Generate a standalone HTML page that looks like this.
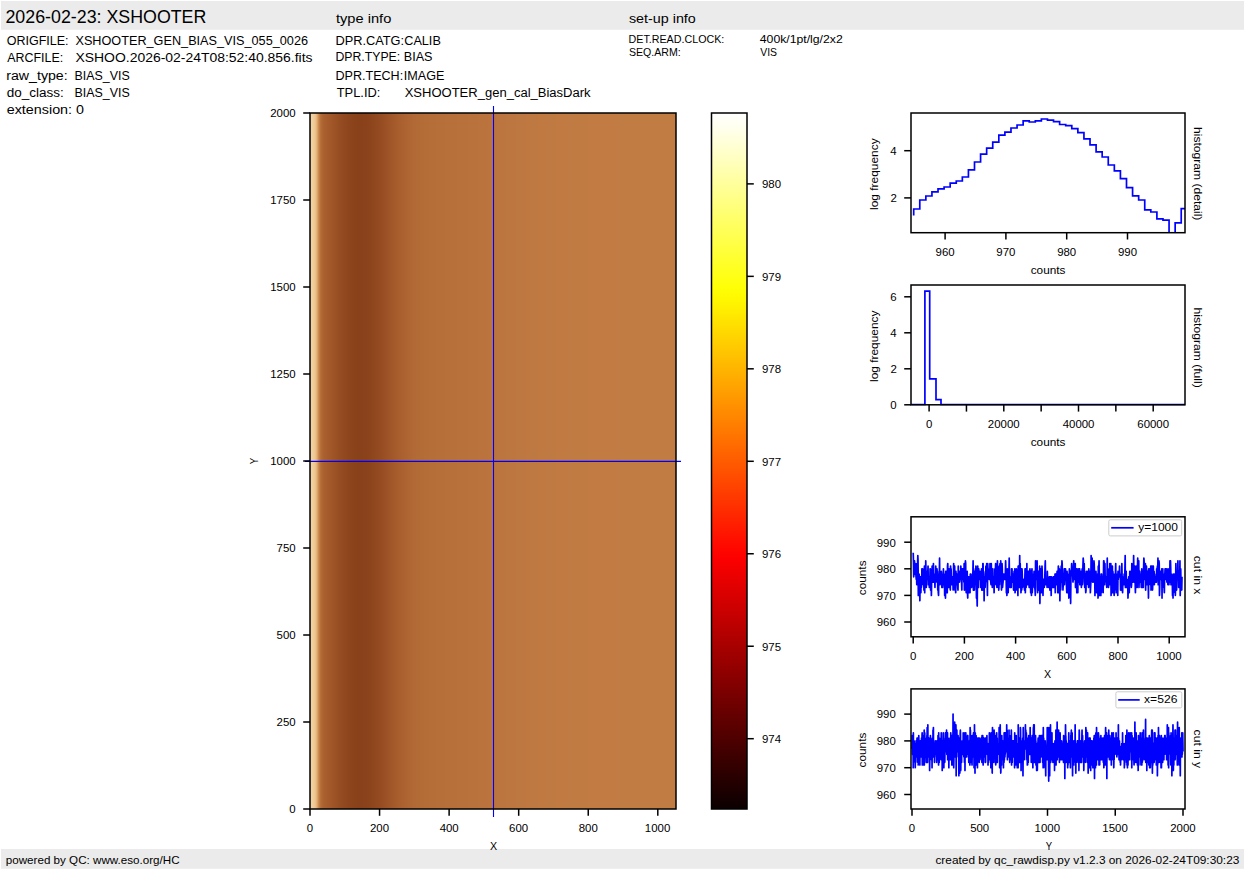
<!DOCTYPE html>
<html><head><meta charset="utf-8"><style>
html,body{margin:0;padding:0;background:#fff;}
body{width:1245px;height:870px;overflow:hidden;}
svg{display:block;font-family:"Liberation Sans", sans-serif;}
</style></head><body>
<svg width="1245" height="870" viewBox="0 0 1245 870">
<rect x="0" y="0" width="1245" height="870" fill="#fff"/>
<rect x="1" y="1" width="1243" height="28.8" fill="#ebebeb"/>
<rect x="1" y="849" width="1243" height="19.8" fill="#ebebeb"/>
<text x="5.48" y="22.90" font-size="17.50" textLength="200.87" lengthAdjust="spacingAndGlyphs" fill="#000">2026-02-23: XSHOOTER</text>
<text x="335.96" y="23.00" font-size="13.12" textLength="55.34" lengthAdjust="spacingAndGlyphs" fill="#000">type info</text>
<text x="628.92" y="22.90" font-size="13.12" textLength="66.89" lengthAdjust="spacingAndGlyphs" fill="#000">set-up info</text>
<text x="6.70" y="44.90" font-size="13.12" textLength="61.85" lengthAdjust="spacingAndGlyphs" fill="#000">ORIGFILE:</text>
<text x="75.43" y="44.90" font-size="13.12" textLength="232.57" lengthAdjust="spacingAndGlyphs" fill="#000">XSHOOTER_GEN_BIAS_VIS_055_0026</text>
<text x="7.30" y="61.60" font-size="13.12" textLength="55.91" lengthAdjust="spacingAndGlyphs" fill="#000">ARCFILE:</text>
<text x="75.43" y="61.60" font-size="13.12" textLength="237.06" lengthAdjust="spacingAndGlyphs" fill="#000">XSHOO.2026-02-24T08:52:40.856.fits</text>
<text x="6.26" y="79.50" font-size="13.12" textLength="61.41" lengthAdjust="spacingAndGlyphs" fill="#000">raw_type:</text>
<text x="74.57" y="79.50" font-size="13.12" textLength="55.17" lengthAdjust="spacingAndGlyphs" fill="#000">BIAS_VIS</text>
<text x="6.71" y="97.30" font-size="13.12" textLength="57.07" lengthAdjust="spacingAndGlyphs" fill="#000">do_class:</text>
<text x="74.57" y="97.30" font-size="13.12" textLength="55.17" lengthAdjust="spacingAndGlyphs" fill="#000">BIAS_VIS</text>
<text x="6.71" y="113.50" font-size="13.12" textLength="65.37" lengthAdjust="spacingAndGlyphs" fill="#000">extension:</text>
<text x="76.08" y="113.50" font-size="13.12" textLength="7.95" lengthAdjust="spacingAndGlyphs" fill="#000">0</text>
<text x="335.47" y="44.80" font-size="13.12" textLength="68.63" lengthAdjust="spacingAndGlyphs" fill="#000">DPR.CATG:</text>
<text x="404.30" y="44.80" font-size="13.12" textLength="36.51" lengthAdjust="spacingAndGlyphs" fill="#000">CALIB</text>
<text x="335.47" y="61.20" font-size="13.12" textLength="64.74" lengthAdjust="spacingAndGlyphs" fill="#000">DPR.TYPE:</text>
<text x="403.77" y="61.20" font-size="13.12" textLength="28.75" lengthAdjust="spacingAndGlyphs" fill="#000">BIAS</text>
<text x="335.47" y="79.60" font-size="13.12" textLength="67.69" lengthAdjust="spacingAndGlyphs" fill="#000">DPR.TECH:</text>
<text x="403.77" y="79.60" font-size="13.12" textLength="40.61" lengthAdjust="spacingAndGlyphs" fill="#000">IMAGE</text>
<text x="336.74" y="96.80" font-size="13.12" textLength="43.63" lengthAdjust="spacingAndGlyphs" fill="#000">TPL.ID:</text>
<text x="404.63" y="96.80" font-size="13.12" textLength="185.98" lengthAdjust="spacingAndGlyphs" fill="#000">XSHOOTER_gen_cal_BiasDark</text>
<text x="628.57" y="43.00" font-size="10.97" textLength="95.75" lengthAdjust="spacingAndGlyphs" fill="#000">DET.READ.CLOCK:</text>
<text x="759.79" y="43.00" font-size="10.97" textLength="82.96" lengthAdjust="spacingAndGlyphs" fill="#000">400k/1pt/lg/2x2</text>
<text x="628.91" y="55.50" font-size="10.97" textLength="51.73" lengthAdjust="spacingAndGlyphs" fill="#000">SEQ.ARM:</text>
<text x="760.22" y="55.50" font-size="10.97" textLength="16.86" lengthAdjust="spacingAndGlyphs" fill="#000">VIS</text>
<text x="5.80" y="863.80" font-size="10.97" textLength="173.74" lengthAdjust="spacingAndGlyphs" fill="#000">powered by QC: www.eso.org/HC</text>
<text x="935.43" y="863.80" font-size="10.97" textLength="303.90" lengthAdjust="spacingAndGlyphs" fill="#000">created by qc_rawdisp.py v1.2.3 on 2026-02-24T09:30:23</text>
<defs><linearGradient id="imgrad" x1="0" x2="1" y1="0" y2="0"><stop offset="0.0014" stop-color="#f2d1a1"/><stop offset="0.0041" stop-color="#f2d0a0"/><stop offset="0.0068" stop-color="#f1cf9e"/><stop offset="0.0096" stop-color="#f0cc9a"/><stop offset="0.0123" stop-color="#eec894"/><stop offset="0.0150" stop-color="#ebc08a"/><stop offset="0.0178" stop-color="#e5b47b"/><stop offset="0.0205" stop-color="#dba167"/><stop offset="0.0232" stop-color="#ce8d53"/><stop offset="0.0260" stop-color="#c17c44"/><stop offset="0.0287" stop-color="#b8703b"/><stop offset="0.0314" stop-color="#b26935"/><stop offset="0.0342" stop-color="#ae6532"/><stop offset="0.0369" stop-color="#ab6230"/><stop offset="0.0396" stop-color="#aa602e"/><stop offset="0.0423" stop-color="#a85e2d"/><stop offset="0.0451" stop-color="#a75d2c"/><stop offset="0.0478" stop-color="#a55c2c"/><stop offset="0.0505" stop-color="#a45a2b"/><stop offset="0.0533" stop-color="#a3592a"/><stop offset="0.0560" stop-color="#a25829"/><stop offset="0.0587" stop-color="#a15728"/><stop offset="0.0615" stop-color="#9f5527"/><stop offset="0.0642" stop-color="#9e5427"/><stop offset="0.0669" stop-color="#9d5326"/><stop offset="0.0697" stop-color="#9c5225"/><stop offset="0.0724" stop-color="#9a5124"/><stop offset="0.0751" stop-color="#995024"/><stop offset="0.0779" stop-color="#984e23"/><stop offset="0.0806" stop-color="#974d22"/><stop offset="0.0833" stop-color="#964c22"/><stop offset="0.0861" stop-color="#954b21"/><stop offset="0.0888" stop-color="#944a20"/><stop offset="0.0915" stop-color="#924920"/><stop offset="0.0943" stop-color="#91481f"/><stop offset="0.0970" stop-color="#91481f"/><stop offset="0.0997" stop-color="#90471e"/><stop offset="0.1025" stop-color="#8f461e"/><stop offset="0.1052" stop-color="#8e451d"/><stop offset="0.1079" stop-color="#8d451d"/><stop offset="0.1107" stop-color="#8c441d"/><stop offset="0.1134" stop-color="#8c441c"/><stop offset="0.1161" stop-color="#8b431c"/><stop offset="0.1189" stop-color="#8b431c"/><stop offset="0.1216" stop-color="#8a421b"/><stop offset="0.1243" stop-color="#8a421b"/><stop offset="0.1270" stop-color="#8a421b"/><stop offset="0.1298" stop-color="#89411b"/><stop offset="0.1325" stop-color="#89411b"/><stop offset="0.1352" stop-color="#89411b"/><stop offset="0.1380" stop-color="#89411b"/><stop offset="0.1407" stop-color="#89411b"/><stop offset="0.1434" stop-color="#89411b"/><stop offset="0.1462" stop-color="#8a421b"/><stop offset="0.1489" stop-color="#8a421b"/><stop offset="0.1516" stop-color="#8a421b"/><stop offset="0.1544" stop-color="#8b421c"/><stop offset="0.1571" stop-color="#8b431c"/><stop offset="0.1598" stop-color="#8c431c"/><stop offset="0.1626" stop-color="#8c441c"/><stop offset="0.1653" stop-color="#8d441d"/><stop offset="0.1680" stop-color="#8d451d"/><stop offset="0.1708" stop-color="#8e461d"/><stop offset="0.1735" stop-color="#8f461e"/><stop offset="0.1762" stop-color="#90471e"/><stop offset="0.1790" stop-color="#91481f"/><stop offset="0.1817" stop-color="#92491f"/><stop offset="0.1844" stop-color="#934920"/><stop offset="0.1872" stop-color="#944a20"/><stop offset="0.1899" stop-color="#954b21"/><stop offset="0.1926" stop-color="#964c21"/><stop offset="0.1954" stop-color="#974d22"/><stop offset="0.1981" stop-color="#984e23"/><stop offset="0.2008" stop-color="#994f23"/><stop offset="0.2036" stop-color="#9a5024"/><stop offset="0.2063" stop-color="#9b5125"/><stop offset="0.2090" stop-color="#9c5225"/><stop offset="0.2117" stop-color="#9d5326"/><stop offset="0.2145" stop-color="#9e5427"/><stop offset="0.2172" stop-color="#9f5527"/><stop offset="0.2199" stop-color="#a05628"/><stop offset="0.2227" stop-color="#a15729"/><stop offset="0.2254" stop-color="#a25829"/><stop offset="0.2281" stop-color="#a3592a"/><stop offset="0.2309" stop-color="#a45a2b"/><stop offset="0.2336" stop-color="#a55b2b"/><stop offset="0.2363" stop-color="#a65c2c"/><stop offset="0.2391" stop-color="#a75d2d"/><stop offset="0.2418" stop-color="#a85e2d"/><stop offset="0.2445" stop-color="#a95f2e"/><stop offset="0.2473" stop-color="#a9602e"/><stop offset="0.2500" stop-color="#aa612f"/><stop offset="0.2527" stop-color="#ab6130"/><stop offset="0.2555" stop-color="#ac6230"/><stop offset="0.2582" stop-color="#ac6331"/><stop offset="0.2609" stop-color="#ad6431"/><stop offset="0.2637" stop-color="#ae6432"/><stop offset="0.2664" stop-color="#ae6532"/><stop offset="0.2691" stop-color="#af6633"/><stop offset="0.2719" stop-color="#af6633"/><stop offset="0.2746" stop-color="#b06733"/><stop offset="0.2773" stop-color="#b06734"/><stop offset="0.2801" stop-color="#b16834"/><stop offset="0.2828" stop-color="#b16935"/><stop offset="0.2855" stop-color="#b26935"/><stop offset="0.2883" stop-color="#b26935"/><stop offset="0.2910" stop-color="#b26a36"/><stop offset="0.2937" stop-color="#b36a36"/><stop offset="0.2964" stop-color="#b36b36"/><stop offset="0.2992" stop-color="#b36b36"/><stop offset="0.3019" stop-color="#b46b37"/><stop offset="0.3046" stop-color="#b46c37"/><stop offset="0.3074" stop-color="#b46c37"/><stop offset="0.3101" stop-color="#b46c37"/><stop offset="0.3128" stop-color="#b56c38"/><stop offset="0.3156" stop-color="#b56d38"/><stop offset="0.3183" stop-color="#b56d38"/><stop offset="0.3210" stop-color="#b56d38"/><stop offset="0.3238" stop-color="#b56d38"/><stop offset="0.3265" stop-color="#b66e38"/><stop offset="0.3292" stop-color="#b66e39"/><stop offset="0.3320" stop-color="#b66e39"/><stop offset="0.3347" stop-color="#b66e39"/><stop offset="0.3374" stop-color="#b66e39"/><stop offset="0.3402" stop-color="#b66e39"/><stop offset="0.3429" stop-color="#b66e39"/><stop offset="0.3456" stop-color="#b66f39"/><stop offset="0.3484" stop-color="#b76f39"/><stop offset="0.3511" stop-color="#b76f39"/><stop offset="0.3538" stop-color="#b76f39"/><stop offset="0.3566" stop-color="#b76f3a"/><stop offset="0.3593" stop-color="#b76f3a"/><stop offset="0.3620" stop-color="#b76f3a"/><stop offset="0.3648" stop-color="#b76f3a"/><stop offset="0.3675" stop-color="#b76f3a"/><stop offset="0.3702" stop-color="#b7703a"/><stop offset="0.3730" stop-color="#b7703a"/><stop offset="0.3757" stop-color="#b7703a"/><stop offset="0.3784" stop-color="#b7703a"/><stop offset="0.3811" stop-color="#b8703a"/><stop offset="0.3839" stop-color="#b8703a"/><stop offset="0.3866" stop-color="#b8703a"/><stop offset="0.3893" stop-color="#b8703a"/><stop offset="0.3921" stop-color="#b8703a"/><stop offset="0.3948" stop-color="#b8703b"/><stop offset="0.3975" stop-color="#b8703b"/><stop offset="0.4003" stop-color="#b8703b"/><stop offset="0.4030" stop-color="#b8713b"/><stop offset="0.4057" stop-color="#b8713b"/><stop offset="0.4085" stop-color="#b8713b"/><stop offset="0.4112" stop-color="#b8713b"/><stop offset="0.4139" stop-color="#b8713b"/><stop offset="0.4167" stop-color="#b8713b"/><stop offset="0.4194" stop-color="#b9713b"/><stop offset="0.4221" stop-color="#b9713b"/><stop offset="0.4249" stop-color="#b9713b"/><stop offset="0.4276" stop-color="#b9713b"/><stop offset="0.4303" stop-color="#b9713b"/><stop offset="0.4331" stop-color="#b9723b"/><stop offset="0.4358" stop-color="#b9723c"/><stop offset="0.4385" stop-color="#b9723c"/><stop offset="0.4413" stop-color="#b9723c"/><stop offset="0.4440" stop-color="#b9723c"/><stop offset="0.4467" stop-color="#b9723c"/><stop offset="0.4495" stop-color="#b9723c"/><stop offset="0.4522" stop-color="#ba723c"/><stop offset="0.4549" stop-color="#ba723c"/><stop offset="0.4577" stop-color="#ba723c"/><stop offset="0.4604" stop-color="#ba733c"/><stop offset="0.4631" stop-color="#ba733c"/><stop offset="0.4658" stop-color="#ba733c"/><stop offset="0.4686" stop-color="#ba733d"/><stop offset="0.4713" stop-color="#ba733d"/><stop offset="0.4740" stop-color="#ba733d"/><stop offset="0.4768" stop-color="#ba733d"/><stop offset="0.4795" stop-color="#ba733d"/><stop offset="0.4822" stop-color="#ba733d"/><stop offset="0.4850" stop-color="#bb733d"/><stop offset="0.4877" stop-color="#bb743d"/><stop offset="0.4904" stop-color="#bb743d"/><stop offset="0.4932" stop-color="#bb743d"/><stop offset="0.4959" stop-color="#bb743d"/><stop offset="0.4986" stop-color="#bb743d"/><stop offset="0.5014" stop-color="#bb743e"/><stop offset="0.5041" stop-color="#bb743e"/><stop offset="0.5068" stop-color="#bb743e"/><stop offset="0.5096" stop-color="#bb743e"/><stop offset="0.5123" stop-color="#bb753e"/><stop offset="0.5150" stop-color="#bc753e"/><stop offset="0.5178" stop-color="#bc753e"/><stop offset="0.5205" stop-color="#bc753e"/><stop offset="0.5232" stop-color="#bc753e"/><stop offset="0.5260" stop-color="#bc753e"/><stop offset="0.5287" stop-color="#bc753e"/><stop offset="0.5314" stop-color="#bc753f"/><stop offset="0.5342" stop-color="#bc753f"/><stop offset="0.5369" stop-color="#bc763f"/><stop offset="0.5396" stop-color="#bc763f"/><stop offset="0.5423" stop-color="#bc763f"/><stop offset="0.5451" stop-color="#bc763f"/><stop offset="0.5478" stop-color="#bd763f"/><stop offset="0.5505" stop-color="#bd763f"/><stop offset="0.5533" stop-color="#bd763f"/><stop offset="0.5560" stop-color="#bd763f"/><stop offset="0.5587" stop-color="#bd763f"/><stop offset="0.5615" stop-color="#bd763f"/><stop offset="0.5642" stop-color="#bd7740"/><stop offset="0.5669" stop-color="#bd7740"/><stop offset="0.5697" stop-color="#bd7740"/><stop offset="0.5724" stop-color="#bd7740"/><stop offset="0.5751" stop-color="#bd7740"/><stop offset="0.5779" stop-color="#bd7740"/><stop offset="0.5806" stop-color="#be7740"/><stop offset="0.5833" stop-color="#be7740"/><stop offset="0.5861" stop-color="#be7740"/><stop offset="0.5888" stop-color="#be7740"/><stop offset="0.5915" stop-color="#be7840"/><stop offset="0.5943" stop-color="#be7840"/><stop offset="0.5970" stop-color="#be7840"/><stop offset="0.5997" stop-color="#be7840"/><stop offset="0.6025" stop-color="#be7841"/><stop offset="0.6052" stop-color="#be7841"/><stop offset="0.6079" stop-color="#be7841"/><stop offset="0.6107" stop-color="#be7841"/><stop offset="0.6134" stop-color="#be7841"/><stop offset="0.6161" stop-color="#be7841"/><stop offset="0.6189" stop-color="#be7841"/><stop offset="0.6216" stop-color="#bf7841"/><stop offset="0.6243" stop-color="#bf7941"/><stop offset="0.6270" stop-color="#bf7941"/><stop offset="0.6298" stop-color="#bf7941"/><stop offset="0.6325" stop-color="#bf7941"/><stop offset="0.6352" stop-color="#bf7941"/><stop offset="0.6380" stop-color="#bf7941"/><stop offset="0.6407" stop-color="#bf7941"/><stop offset="0.6434" stop-color="#bf7941"/><stop offset="0.6462" stop-color="#bf7942"/><stop offset="0.6489" stop-color="#bf7942"/><stop offset="0.6516" stop-color="#bf7942"/><stop offset="0.6544" stop-color="#bf7942"/><stop offset="0.6571" stop-color="#bf7942"/><stop offset="0.6598" stop-color="#bf7942"/><stop offset="0.6626" stop-color="#bf7942"/><stop offset="0.6653" stop-color="#bf7a42"/><stop offset="0.6680" stop-color="#bf7a42"/><stop offset="0.6708" stop-color="#bf7a42"/><stop offset="0.6735" stop-color="#c07a42"/><stop offset="0.6762" stop-color="#c07a42"/><stop offset="0.6790" stop-color="#c07a42"/><stop offset="0.6817" stop-color="#c07a42"/><stop offset="0.6844" stop-color="#c07a42"/><stop offset="0.6872" stop-color="#c07a42"/><stop offset="0.6899" stop-color="#c07a42"/><stop offset="0.6926" stop-color="#c07a42"/><stop offset="0.6954" stop-color="#c07a42"/><stop offset="0.6981" stop-color="#c07a42"/><stop offset="0.7008" stop-color="#c07a42"/><stop offset="0.7036" stop-color="#c07a42"/><stop offset="0.7063" stop-color="#c07a43"/><stop offset="0.7090" stop-color="#c07a43"/><stop offset="0.7117" stop-color="#c07a43"/><stop offset="0.7145" stop-color="#c07a43"/><stop offset="0.7172" stop-color="#c07a43"/><stop offset="0.7199" stop-color="#c07b43"/><stop offset="0.7227" stop-color="#c07b43"/><stop offset="0.7254" stop-color="#c07b43"/><stop offset="0.7281" stop-color="#c07b43"/><stop offset="0.7309" stop-color="#c07b43"/><stop offset="0.7336" stop-color="#c07b43"/><stop offset="0.7363" stop-color="#c07b43"/><stop offset="0.7391" stop-color="#c07b43"/><stop offset="0.7418" stop-color="#c07b43"/><stop offset="0.7445" stop-color="#c07b43"/><stop offset="0.7473" stop-color="#c07b43"/><stop offset="0.7500" stop-color="#c07b43"/><stop offset="0.7527" stop-color="#c07b43"/><stop offset="0.7555" stop-color="#c07b43"/><stop offset="0.7582" stop-color="#c07b43"/><stop offset="0.7609" stop-color="#c17b43"/><stop offset="0.7637" stop-color="#c17b43"/><stop offset="0.7664" stop-color="#c17b43"/><stop offset="0.7691" stop-color="#c17b43"/><stop offset="0.7719" stop-color="#c17b43"/><stop offset="0.7746" stop-color="#c17b43"/><stop offset="0.7773" stop-color="#c17b43"/><stop offset="0.7801" stop-color="#c17b43"/><stop offset="0.7828" stop-color="#c17b43"/><stop offset="0.7855" stop-color="#c17b43"/><stop offset="0.7883" stop-color="#c17b43"/><stop offset="0.7910" stop-color="#c17b43"/><stop offset="0.7937" stop-color="#c17b43"/><stop offset="0.7964" stop-color="#c17b43"/><stop offset="0.7992" stop-color="#c17b43"/><stop offset="0.8019" stop-color="#c17b43"/><stop offset="0.8046" stop-color="#c17b43"/><stop offset="0.8074" stop-color="#c17b43"/><stop offset="0.8101" stop-color="#c17b43"/><stop offset="0.8128" stop-color="#c17b43"/><stop offset="0.8156" stop-color="#c17b43"/><stop offset="0.8183" stop-color="#c17b43"/><stop offset="0.8210" stop-color="#c17b43"/><stop offset="0.8238" stop-color="#c17b43"/><stop offset="0.8265" stop-color="#c17b43"/><stop offset="0.8292" stop-color="#c17b43"/><stop offset="0.8320" stop-color="#c17b43"/><stop offset="0.8347" stop-color="#c17b43"/><stop offset="0.8374" stop-color="#c17b43"/><stop offset="0.8402" stop-color="#c17b43"/><stop offset="0.8429" stop-color="#c17b44"/><stop offset="0.8456" stop-color="#c17b44"/><stop offset="0.8484" stop-color="#c17b44"/><stop offset="0.8511" stop-color="#c17c44"/><stop offset="0.8538" stop-color="#c17c44"/><stop offset="0.8566" stop-color="#c17c44"/><stop offset="0.8593" stop-color="#c17c44"/><stop offset="0.8620" stop-color="#c17c44"/><stop offset="0.8648" stop-color="#c17c44"/><stop offset="0.8675" stop-color="#c17c44"/><stop offset="0.8702" stop-color="#c17c44"/><stop offset="0.8730" stop-color="#c17c44"/><stop offset="0.8757" stop-color="#c17c44"/><stop offset="0.8784" stop-color="#c17c44"/><stop offset="0.8811" stop-color="#c17c44"/><stop offset="0.8839" stop-color="#c17c44"/><stop offset="0.8866" stop-color="#c17c44"/><stop offset="0.8893" stop-color="#c17c44"/><stop offset="0.8921" stop-color="#c17c44"/><stop offset="0.8948" stop-color="#c17c44"/><stop offset="0.8975" stop-color="#c17c44"/><stop offset="0.9003" stop-color="#c17c44"/><stop offset="0.9030" stop-color="#c17c44"/><stop offset="0.9057" stop-color="#c17c44"/><stop offset="0.9085" stop-color="#c17c44"/><stop offset="0.9112" stop-color="#c17c44"/><stop offset="0.9139" stop-color="#c17c44"/><stop offset="0.9167" stop-color="#c17c44"/><stop offset="0.9194" stop-color="#c17c44"/><stop offset="0.9221" stop-color="#c17c44"/><stop offset="0.9249" stop-color="#c17c44"/><stop offset="0.9276" stop-color="#c17c44"/><stop offset="0.9303" stop-color="#c17c44"/><stop offset="0.9331" stop-color="#c17c44"/><stop offset="0.9358" stop-color="#c17c44"/><stop offset="0.9385" stop-color="#c17c44"/><stop offset="0.9413" stop-color="#c17c44"/><stop offset="0.9440" stop-color="#c17c44"/><stop offset="0.9467" stop-color="#c17c44"/><stop offset="0.9495" stop-color="#c17c44"/><stop offset="0.9522" stop-color="#c17c44"/><stop offset="0.9549" stop-color="#c17c44"/><stop offset="0.9577" stop-color="#c17c44"/><stop offset="0.9604" stop-color="#c17c44"/><stop offset="0.9631" stop-color="#c17c44"/><stop offset="0.9658" stop-color="#c17c44"/><stop offset="0.9686" stop-color="#c17c44"/><stop offset="0.9713" stop-color="#c17c44"/><stop offset="0.9740" stop-color="#c17c44"/><stop offset="0.9768" stop-color="#c17c44"/><stop offset="0.9795" stop-color="#c17c44"/><stop offset="0.9822" stop-color="#c17c44"/><stop offset="0.9850" stop-color="#c17c44"/><stop offset="0.9877" stop-color="#c17c44"/><stop offset="0.9904" stop-color="#c17c44"/><stop offset="0.9932" stop-color="#c17c44"/><stop offset="0.9959" stop-color="#c17c44"/><stop offset="0.9986" stop-color="#c17c44"/></linearGradient>
<linearGradient id="cbgrad" x1="0" x2="0" y1="1" y2="0"><stop offset="0.0000" stop-color="#0b0000"/><stop offset="0.0156" stop-color="#150000"/><stop offset="0.0312" stop-color="#200000"/><stop offset="0.0469" stop-color="#2a0000"/><stop offset="0.0625" stop-color="#350000"/><stop offset="0.0781" stop-color="#3f0000"/><stop offset="0.0938" stop-color="#4a0000"/><stop offset="0.1094" stop-color="#540000"/><stop offset="0.1250" stop-color="#5f0000"/><stop offset="0.1406" stop-color="#690000"/><stop offset="0.1562" stop-color="#740000"/><stop offset="0.1719" stop-color="#7e0000"/><stop offset="0.1875" stop-color="#890000"/><stop offset="0.2031" stop-color="#930000"/><stop offset="0.2188" stop-color="#9e0000"/><stop offset="0.2344" stop-color="#a80000"/><stop offset="0.2500" stop-color="#b30000"/><stop offset="0.2656" stop-color="#bd0000"/><stop offset="0.2812" stop-color="#c80000"/><stop offset="0.2969" stop-color="#d20000"/><stop offset="0.3125" stop-color="#dd0000"/><stop offset="0.3281" stop-color="#e70000"/><stop offset="0.3438" stop-color="#f20000"/><stop offset="0.3594" stop-color="#fc0000"/><stop offset="0.3750" stop-color="#ff0800"/><stop offset="0.3906" stop-color="#ff1200"/><stop offset="0.4062" stop-color="#ff1d00"/><stop offset="0.4219" stop-color="#ff2700"/><stop offset="0.4375" stop-color="#ff3200"/><stop offset="0.4531" stop-color="#ff3c00"/><stop offset="0.4688" stop-color="#ff4700"/><stop offset="0.4844" stop-color="#ff5100"/><stop offset="0.5000" stop-color="#ff5c00"/><stop offset="0.5156" stop-color="#ff6600"/><stop offset="0.5312" stop-color="#ff7100"/><stop offset="0.5469" stop-color="#ff7b00"/><stop offset="0.5625" stop-color="#ff8600"/><stop offset="0.5781" stop-color="#ff9000"/><stop offset="0.5938" stop-color="#ff9b00"/><stop offset="0.6094" stop-color="#ffa500"/><stop offset="0.6250" stop-color="#ffb000"/><stop offset="0.6406" stop-color="#ffba00"/><stop offset="0.6562" stop-color="#ffc500"/><stop offset="0.6719" stop-color="#ffcf00"/><stop offset="0.6875" stop-color="#ffda00"/><stop offset="0.7031" stop-color="#ffe400"/><stop offset="0.7188" stop-color="#ffef00"/><stop offset="0.7344" stop-color="#fff900"/><stop offset="0.7500" stop-color="#ffff07"/><stop offset="0.7656" stop-color="#ffff17"/><stop offset="0.7812" stop-color="#ffff26"/><stop offset="0.7969" stop-color="#ffff36"/><stop offset="0.8125" stop-color="#ffff46"/><stop offset="0.8281" stop-color="#ffff56"/><stop offset="0.8438" stop-color="#ffff65"/><stop offset="0.8594" stop-color="#ffff75"/><stop offset="0.8750" stop-color="#ffff85"/><stop offset="0.8906" stop-color="#ffff95"/><stop offset="0.9062" stop-color="#ffffa4"/><stop offset="0.9219" stop-color="#ffffb4"/><stop offset="0.9375" stop-color="#ffffc4"/><stop offset="0.9531" stop-color="#ffffd4"/><stop offset="0.9688" stop-color="#ffffe3"/><stop offset="0.9844" stop-color="#fffff3"/><stop offset="1.0000" stop-color="#ffffff"/></linearGradient></defs>
<rect x="310.0" y="113.0" width="366" height="696" fill="url(#imgrad)"/>
<line x1="493.50" y1="106.00" x2="493.50" y2="817.00" stroke="#0000ff" stroke-width="1.1" />
<line x1="305.00" y1="461.40" x2="681.00" y2="461.40" stroke="#0000ff" stroke-width="1.1" />
<rect x="310.00" y="113.00" width="366.00" height="696.00" fill="none" stroke="#000" stroke-width="1.5" stroke-linejoin="miter"/>
<line x1="310.00" y1="809.00" x2="310.00" y2="815.80" stroke="#000" stroke-width="1.5" />
<text x="306.82" y="832.39" font-size="10.50" textLength="6.36" lengthAdjust="spacingAndGlyphs" fill="#000">0</text>
<line x1="379.56" y1="809.00" x2="379.56" y2="815.80" stroke="#000" stroke-width="1.5" />
<text x="369.98" y="832.39" font-size="10.50" textLength="19.09" lengthAdjust="spacingAndGlyphs" fill="#000">200</text>
<line x1="449.12" y1="809.00" x2="449.12" y2="815.80" stroke="#000" stroke-width="1.5" />
<text x="439.66" y="832.39" font-size="10.50" textLength="19.09" lengthAdjust="spacingAndGlyphs" fill="#000">400</text>
<line x1="518.68" y1="809.00" x2="518.68" y2="815.80" stroke="#000" stroke-width="1.5" />
<text x="509.12" y="832.39" font-size="10.50" textLength="19.09" lengthAdjust="spacingAndGlyphs" fill="#000">600</text>
<line x1="588.24" y1="809.00" x2="588.24" y2="815.80" stroke="#000" stroke-width="1.5" />
<text x="578.69" y="832.39" font-size="10.50" textLength="19.09" lengthAdjust="spacingAndGlyphs" fill="#000">800</text>
<line x1="657.80" y1="809.00" x2="657.80" y2="815.80" stroke="#000" stroke-width="1.5" />
<text x="644.86" y="832.39" font-size="10.50" textLength="25.45" lengthAdjust="spacingAndGlyphs" fill="#000">1000</text>
<line x1="303.20" y1="809.00" x2="310.00" y2="809.00" stroke="#000" stroke-width="1.5" />
<text x="289.30" y="813.35" font-size="10.50" textLength="6.36" lengthAdjust="spacingAndGlyphs" fill="#000">0</text>
<line x1="303.20" y1="722.00" x2="310.00" y2="722.00" stroke="#000" stroke-width="1.5" />
<text x="276.58" y="726.35" font-size="10.50" textLength="19.09" lengthAdjust="spacingAndGlyphs" fill="#000">250</text>
<line x1="303.20" y1="635.00" x2="310.00" y2="635.00" stroke="#000" stroke-width="1.5" />
<text x="276.58" y="639.35" font-size="10.50" textLength="19.09" lengthAdjust="spacingAndGlyphs" fill="#000">500</text>
<line x1="303.20" y1="548.00" x2="310.00" y2="548.00" stroke="#000" stroke-width="1.5" />
<text x="276.58" y="552.35" font-size="10.50" textLength="19.09" lengthAdjust="spacingAndGlyphs" fill="#000">750</text>
<line x1="303.20" y1="461.00" x2="310.00" y2="461.00" stroke="#000" stroke-width="1.5" />
<text x="270.21" y="465.34" font-size="10.50" textLength="25.45" lengthAdjust="spacingAndGlyphs" fill="#000">1000</text>
<line x1="303.20" y1="374.00" x2="310.00" y2="374.00" stroke="#000" stroke-width="1.5" />
<text x="270.21" y="378.34" font-size="10.50" textLength="25.45" lengthAdjust="spacingAndGlyphs" fill="#000">1250</text>
<line x1="303.20" y1="287.00" x2="310.00" y2="287.00" stroke="#000" stroke-width="1.5" />
<text x="270.21" y="291.34" font-size="10.50" textLength="25.45" lengthAdjust="spacingAndGlyphs" fill="#000">1500</text>
<line x1="303.20" y1="200.00" x2="310.00" y2="200.00" stroke="#000" stroke-width="1.5" />
<text x="270.21" y="204.34" font-size="10.50" textLength="25.45" lengthAdjust="spacingAndGlyphs" fill="#000">1750</text>
<line x1="303.20" y1="113.00" x2="310.00" y2="113.00" stroke="#000" stroke-width="1.5" />
<text x="270.21" y="117.34" font-size="10.50" textLength="25.45" lengthAdjust="spacingAndGlyphs" fill="#000">2000</text>
<text x="489.95" y="850.00" font-size="10.92" textLength="7.12" lengthAdjust="spacingAndGlyphs" fill="#000">X</text>
<g transform="translate(257.70,461.00) rotate(-90)"><text x="-3.18" y="0" font-size="10.92" textLength="6.35" lengthAdjust="spacingAndGlyphs" fill="#000">Y</text></g>
<rect x="711.5" y="113.0" width="35.50" height="696.00" fill="url(#cbgrad)"/>
<rect x="711.50" y="113.00" width="35.50" height="696.00" fill="none" stroke="#000" stroke-width="1.5" stroke-linejoin="miter"/>
<line x1="747.00" y1="738.70" x2="753.80" y2="738.70" stroke="#000" stroke-width="1.5" />
<text x="761.97" y="743.25" font-size="10.50" textLength="19.09" lengthAdjust="spacingAndGlyphs" fill="#000">974</text>
<line x1="747.00" y1="646.23" x2="753.80" y2="646.23" stroke="#000" stroke-width="1.5" />
<text x="761.97" y="650.77" font-size="10.50" textLength="19.09" lengthAdjust="spacingAndGlyphs" fill="#000">975</text>
<line x1="747.00" y1="553.76" x2="753.80" y2="553.76" stroke="#000" stroke-width="1.5" />
<text x="761.97" y="558.30" font-size="10.50" textLength="19.09" lengthAdjust="spacingAndGlyphs" fill="#000">976</text>
<line x1="747.00" y1="461.29" x2="753.80" y2="461.29" stroke="#000" stroke-width="1.5" />
<text x="761.97" y="465.84" font-size="10.50" textLength="19.09" lengthAdjust="spacingAndGlyphs" fill="#000">977</text>
<line x1="747.00" y1="368.82" x2="753.80" y2="368.82" stroke="#000" stroke-width="1.5" />
<text x="761.97" y="373.37" font-size="10.50" textLength="19.09" lengthAdjust="spacingAndGlyphs" fill="#000">978</text>
<line x1="747.00" y1="276.35" x2="753.80" y2="276.35" stroke="#000" stroke-width="1.5" />
<text x="761.97" y="280.89" font-size="10.50" textLength="19.09" lengthAdjust="spacingAndGlyphs" fill="#000">979</text>
<line x1="747.00" y1="183.88" x2="753.80" y2="183.88" stroke="#000" stroke-width="1.5" />
<text x="761.97" y="188.43" font-size="10.50" textLength="19.09" lengthAdjust="spacingAndGlyphs" fill="#000">980</text>
<clipPath id="chd"><rect x="911.0" y="113.0" width="274.0" height="119.69999999999999"/></clipPath>
<path d="M913.70,215.6 L913.70,209.00 L919.78,209.00 L919.78,200.00 L925.86,200.00 L925.86,196.00 L931.94,196.00 L931.94,191.90 L938.02,191.90 L938.02,188.90 L944.10,188.90 L944.10,187.00 L950.18,187.00 L950.18,183.20 L956.26,183.20 L956.26,181.00 L962.34,181.00 L962.34,177.00 L968.42,177.00 L968.42,169.80 L974.50,169.80 L974.50,162.00 L980.58,162.00 L980.58,154.10 L986.66,154.10 L986.66,148.10 L992.74,148.10 L992.74,142.10 L998.82,142.10 L998.82,135.10 L1004.90,135.10 L1004.90,132.10 L1010.98,132.10 L1010.98,128.00 L1017.06,128.00 L1017.06,125.00 L1023.14,125.00 L1023.14,120.80 L1029.22,120.80 L1029.22,122.00 L1035.30,122.00 L1035.30,120.80 L1041.38,120.80 L1041.38,119.00 L1047.46,119.00 L1047.46,120.20 L1053.54,120.20 L1053.54,121.70 L1059.62,121.70 L1059.62,124.50 L1065.70,124.50 L1065.70,125.70 L1071.78,125.70 L1071.78,128.70 L1077.86,128.70 L1077.86,132.70 L1083.94,132.70 L1083.94,138.80 L1090.02,138.80 L1090.02,144.80 L1096.10,144.80 L1096.10,151.80 L1102.18,151.80 L1102.18,157.00 L1108.26,157.00 L1108.26,165.00 L1114.34,165.00 L1114.34,170.80 L1120.42,170.80 L1120.42,178.70 L1126.50,178.70 L1126.50,187.70 L1132.58,187.70 L1132.58,195.90 L1138.66,195.90 L1138.66,200.00 L1144.74,200.00 L1144.74,209.80 L1150.82,209.80 L1150.82,212.00 L1156.90,212.00 L1156.90,218.80 L1162.98,218.80 L1162.98,220.10 L1169.06,220.10 L1169.06,237.70 L1175.14,237.70 L1175.14,222.80 L1181.22,222.80 L1181.22,208.60 L1187.30,208.60" fill="none" stroke="#0000ff" stroke-width="1.7" stroke-linejoin="miter" clip-path="url(#chd)"/>
<rect x="911.00" y="113.00" width="274.00" height="119.70" fill="none" stroke="#000" stroke-width="1.5" stroke-linejoin="miter"/>
<line x1="945.10" y1="232.70" x2="945.10" y2="239.50" stroke="#000" stroke-width="1.5" />
<text x="935.57" y="256.19" font-size="10.50" textLength="19.09" lengthAdjust="spacingAndGlyphs" fill="#000">960</text>
<line x1="1005.90" y1="232.70" x2="1005.90" y2="239.50" stroke="#000" stroke-width="1.5" />
<text x="996.37" y="256.19" font-size="10.50" textLength="19.09" lengthAdjust="spacingAndGlyphs" fill="#000">970</text>
<line x1="1066.70" y1="232.70" x2="1066.70" y2="239.50" stroke="#000" stroke-width="1.5" />
<text x="1057.17" y="256.19" font-size="10.50" textLength="19.09" lengthAdjust="spacingAndGlyphs" fill="#000">980</text>
<line x1="1127.50" y1="232.70" x2="1127.50" y2="239.50" stroke="#000" stroke-width="1.5" />
<text x="1117.97" y="256.19" font-size="10.50" textLength="19.09" lengthAdjust="spacingAndGlyphs" fill="#000">990</text>
<line x1="904.20" y1="197.90" x2="911.00" y2="197.90" stroke="#000" stroke-width="1.5" />
<text x="890.64" y="202.24" font-size="10.50" textLength="6.36" lengthAdjust="spacingAndGlyphs" fill="#000">2</text>
<line x1="904.20" y1="150.70" x2="911.00" y2="150.70" stroke="#000" stroke-width="1.5" />
<text x="890.20" y="155.04" font-size="10.50" textLength="6.36" lengthAdjust="spacingAndGlyphs" fill="#000">4</text>
<text x="1030.69" y="274.00" font-size="10.92" textLength="34.76" lengthAdjust="spacingAndGlyphs" fill="#000">counts</text>
<g transform="translate(878.10,173.85) rotate(-90)"><text x="-36.11" y="0" font-size="10.92" textLength="71.55" lengthAdjust="spacingAndGlyphs" fill="#000">log frequency</text></g>
<g transform="translate(1194.00,173.70) rotate(90)"><text x="-46.71" y="0" font-size="10.92" textLength="93.37" lengthAdjust="spacingAndGlyphs" fill="#000">histogram (detail)</text></g>
<path d="M911.00,404.50 L924.9,404.50 L924.9,291.1 L929.7,291.1 L929.7,378.9 L936.0,378.9 L936.0,399.6 L941.0,399.6 L941.0,404.50 L1185.00,404.50" fill="none" stroke="#0000ff" stroke-width="1.7" stroke-linejoin="miter"/>
<rect x="911.00" y="285.00" width="274.00" height="119.80" fill="none" stroke="#000" stroke-width="1.5" stroke-linejoin="miter"/>
<line x1="929.10" y1="404.80" x2="929.10" y2="411.60" stroke="#000" stroke-width="1.5" />
<text x="925.92" y="428.19" font-size="10.50" textLength="6.36" lengthAdjust="spacingAndGlyphs" fill="#000">0</text>
<line x1="966.45" y1="404.80" x2="966.45" y2="411.60" stroke="#000" stroke-width="1.5" />
<line x1="1003.80" y1="404.80" x2="1003.80" y2="411.60" stroke="#000" stroke-width="1.5" />
<text x="987.86" y="428.19" font-size="10.50" textLength="31.81" lengthAdjust="spacingAndGlyphs" fill="#000">20000</text>
<line x1="1041.15" y1="404.80" x2="1041.15" y2="411.60" stroke="#000" stroke-width="1.5" />
<line x1="1078.50" y1="404.80" x2="1078.50" y2="411.60" stroke="#000" stroke-width="1.5" />
<text x="1062.68" y="428.19" font-size="10.50" textLength="31.81" lengthAdjust="spacingAndGlyphs" fill="#000">40000</text>
<line x1="1115.85" y1="404.80" x2="1115.85" y2="411.60" stroke="#000" stroke-width="1.5" />
<line x1="1153.20" y1="404.80" x2="1153.20" y2="411.60" stroke="#000" stroke-width="1.5" />
<text x="1137.28" y="428.19" font-size="10.50" textLength="31.81" lengthAdjust="spacingAndGlyphs" fill="#000">60000</text>
<line x1="904.20" y1="404.80" x2="911.00" y2="404.80" stroke="#000" stroke-width="1.5" />
<text x="890.30" y="409.14" font-size="10.50" textLength="6.36" lengthAdjust="spacingAndGlyphs" fill="#000">0</text>
<line x1="904.20" y1="368.80" x2="911.00" y2="368.80" stroke="#000" stroke-width="1.5" />
<text x="890.64" y="373.14" font-size="10.50" textLength="6.36" lengthAdjust="spacingAndGlyphs" fill="#000">2</text>
<line x1="904.20" y1="332.80" x2="911.00" y2="332.80" stroke="#000" stroke-width="1.5" />
<text x="890.20" y="337.14" font-size="10.50" textLength="6.36" lengthAdjust="spacingAndGlyphs" fill="#000">4</text>
<line x1="904.20" y1="296.80" x2="911.00" y2="296.80" stroke="#000" stroke-width="1.5" />
<text x="890.27" y="301.14" font-size="10.50" textLength="6.36" lengthAdjust="spacingAndGlyphs" fill="#000">6</text>
<text x="1030.69" y="446.00" font-size="10.92" textLength="34.76" lengthAdjust="spacingAndGlyphs" fill="#000">counts</text>
<g transform="translate(878.10,345.90) rotate(-90)"><text x="-36.11" y="0" font-size="10.92" textLength="71.55" lengthAdjust="spacingAndGlyphs" fill="#000">log frequency</text></g>
<g transform="translate(1194.00,347.70) rotate(90)"><text x="-40.11" y="0" font-size="10.92" textLength="80.17" lengthAdjust="spacingAndGlyphs" fill="#000">histogram (full)</text></g>
<polyline points="913.20,552.84 913.46,560.82 913.71,576.78 913.97,574.12 914.22,571.46 914.48,560.82 914.74,574.12 914.99,574.12 915.25,563.48 915.50,563.48 915.76,571.46 916.02,576.78 916.27,579.44 916.53,574.12 916.78,584.76 917.04,563.48 917.30,574.12 917.55,566.14 917.81,555.50 918.06,560.82 918.32,595.40 918.58,579.44 918.83,590.08 919.09,574.12 919.34,576.78 919.60,579.44 919.86,600.72 920.11,582.10 920.37,579.44 920.62,576.78 920.88,592.74 921.14,582.10 921.39,587.42 921.65,584.76 921.90,568.80 922.16,584.76 922.42,579.44 922.67,568.80 922.93,582.10 923.18,579.44 923.44,576.78 923.70,576.78 923.95,590.08 924.21,576.78 924.46,566.14 924.72,592.74 924.98,568.80 925.23,576.78 925.49,584.76 925.74,560.82 926.00,571.46 926.26,587.42 926.51,576.78 926.77,571.46 927.02,579.44 927.28,571.46 927.54,579.44 927.79,571.46 928.05,566.14 928.30,584.76 928.56,576.78 928.82,582.10 929.07,576.78 929.33,587.42 929.58,582.10 929.84,579.44 930.10,568.80 930.35,568.80 930.61,590.08 930.86,584.76 931.12,571.46 931.38,595.40 931.63,582.10 931.89,579.44 932.14,566.14 932.40,571.46 932.66,582.10 932.91,582.10 933.17,579.44 933.42,563.48 933.68,582.10 933.94,579.44 934.19,574.12 934.45,579.44 934.70,579.44 934.96,587.42 935.22,576.78 935.47,582.10 935.73,566.14 935.98,571.46 936.24,576.78 936.50,571.46 936.75,582.10 937.01,568.80 937.26,576.78 937.52,571.46 937.78,590.08 938.03,574.12 938.29,592.74 938.54,595.40 938.80,579.44 939.06,584.76 939.31,576.78 939.57,558.16 939.82,584.76 940.08,584.76 940.34,576.78 940.59,574.12 940.85,579.44 941.10,579.44 941.36,571.46 941.62,574.12 941.87,587.42 942.13,579.44 942.38,576.78 942.64,587.42 942.90,576.78 943.15,584.76 943.41,568.80 943.66,576.78 943.92,576.78 944.18,582.10 944.43,579.44 944.69,595.40 944.94,587.42 945.20,574.12 945.46,598.06 945.71,571.46 945.97,592.74 946.22,571.46 946.48,584.76 946.74,571.46 946.99,576.78 947.25,592.74 947.50,566.14 947.76,563.48 948.02,579.44 948.27,579.44 948.53,579.44 948.78,587.42 949.04,568.80 949.30,582.10 949.55,579.44 949.81,584.76 950.06,584.76 950.32,590.08 950.58,566.14 950.83,579.44 951.09,568.80 951.34,576.78 951.60,584.76 951.86,582.10 952.11,582.10 952.37,576.78 952.62,582.10 952.88,579.44 953.14,590.08 953.39,584.76 953.65,563.48 953.90,584.76 954.16,587.42 954.42,574.12 954.67,566.14 954.93,590.08 955.18,579.44 955.44,584.76 955.70,592.74 955.95,571.46 956.21,576.78 956.46,576.78 956.72,584.76 956.98,574.12 957.23,582.10 957.49,579.44 957.74,587.42 958.00,590.08 958.26,566.14 958.51,582.10 958.77,574.12 959.02,579.44 959.28,582.10 959.54,582.10 959.79,571.46 960.05,579.44 960.30,579.44 960.56,576.78 960.82,566.14 961.07,571.46 961.33,574.12 961.58,582.10 961.84,590.08 962.10,568.80 962.35,568.80 962.61,579.44 962.86,574.12 963.12,571.46 963.38,571.46 963.63,568.80 963.89,582.10 964.14,563.48 964.40,590.08 964.66,568.80 964.91,574.12 965.17,568.80 965.42,560.82 965.68,563.48 965.94,587.42 966.19,592.74 966.45,571.46 966.70,587.42 966.96,576.78 967.22,571.46 967.47,592.74 967.73,598.06 967.98,576.78 968.24,576.78 968.50,579.44 968.75,576.78 969.01,584.76 969.26,592.74 969.52,579.44 969.78,587.42 970.03,592.74 970.29,574.12 970.54,579.44 970.80,574.12 971.06,587.42 971.31,584.76 971.57,587.42 971.82,584.76 972.08,576.78 972.34,584.76 972.59,574.12 972.85,574.12 973.10,560.82 973.36,590.08 973.62,568.80 973.87,579.44 974.13,576.78 974.38,590.08 974.64,582.10 974.90,571.46 975.15,579.44 975.41,576.78 975.66,579.44 975.92,566.14 976.18,576.78 976.43,598.06 976.69,584.76 976.94,595.40 977.20,606.04 977.46,582.10 977.71,566.14 977.97,576.78 978.22,587.42 978.48,587.42 978.74,568.80 978.99,576.78 979.25,576.78 979.50,579.44 979.76,576.78 980.02,571.46 980.27,574.12 980.53,576.78 980.78,587.42 981.04,574.12 981.30,584.76 981.55,568.80 981.81,590.08 982.06,579.44 982.32,576.78 982.58,590.08 982.83,563.48 983.09,563.48 983.34,582.10 983.60,571.46 983.86,574.12 984.11,600.72 984.37,576.78 984.62,579.44 984.88,576.78 985.14,587.42 985.39,579.44 985.65,579.44 985.90,566.14 986.16,574.12 986.42,576.78 986.67,563.48 986.93,582.10 987.18,582.10 987.44,595.40 987.70,563.48 987.95,568.80 988.21,568.80 988.46,571.46 988.72,576.78 988.98,576.78 989.23,579.44 989.49,579.44 989.74,576.78 990.00,563.48 990.26,574.12 990.51,579.44 990.77,582.10 991.02,584.76 991.28,563.48 991.54,574.12 991.79,576.78 992.05,582.10 992.30,587.42 992.56,579.44 992.82,568.80 993.07,582.10 993.33,579.44 993.58,579.44 993.84,576.78 994.10,592.74 994.35,579.44 994.61,584.76 994.86,568.80 995.12,584.76 995.38,571.46 995.63,563.48 995.89,579.44 996.14,582.10 996.40,576.78 996.66,576.78 996.91,587.42 997.17,574.12 997.42,560.82 997.68,579.44 997.94,579.44 998.19,587.42 998.45,574.12 998.70,590.08 998.96,587.42 999.22,566.14 999.47,584.76 999.73,568.80 999.98,563.48 1000.24,576.78 1000.50,574.12 1000.75,560.82 1001.01,579.44 1001.26,582.10 1001.52,590.08 1001.78,576.78 1002.03,563.48 1002.29,568.80 1002.54,587.42 1002.80,584.76 1003.06,582.10 1003.31,574.12 1003.57,579.44 1003.82,576.78 1004.08,574.12 1004.34,579.44 1004.59,579.44 1004.85,576.78 1005.10,579.44 1005.36,574.12 1005.62,560.82 1005.87,571.46 1006.13,576.78 1006.38,592.74 1006.64,574.12 1006.90,595.40 1007.15,590.08 1007.41,568.80 1007.66,571.46 1007.92,579.44 1008.18,592.74 1008.43,582.10 1008.69,584.76 1008.94,571.46 1009.20,558.16 1009.46,576.78 1009.71,584.76 1009.97,587.42 1010.22,579.44 1010.48,579.44 1010.74,587.42 1010.99,576.78 1011.25,587.42 1011.50,568.80 1011.76,568.80 1012.02,568.80 1012.27,582.10 1012.53,574.12 1012.78,579.44 1013.04,582.10 1013.30,582.10 1013.55,590.08 1013.81,590.08 1014.06,571.46 1014.32,579.44 1014.58,576.78 1014.83,568.80 1015.09,592.74 1015.34,584.76 1015.60,576.78 1015.86,574.12 1016.11,582.10 1016.37,568.80 1016.62,576.78 1016.88,590.08 1017.14,587.42 1017.39,571.46 1017.65,574.12 1017.90,595.40 1018.16,566.14 1018.42,571.46 1018.67,566.14 1018.93,582.10 1019.18,579.44 1019.44,587.42 1019.70,555.50 1019.95,579.44 1020.21,563.48 1020.46,584.76 1020.72,576.78 1020.98,592.74 1021.23,582.10 1021.49,568.80 1021.74,590.08 1022.00,568.80 1022.26,574.12 1022.51,587.42 1022.77,582.10 1023.02,582.10 1023.28,579.44 1023.54,582.10 1023.79,584.76 1024.05,579.44 1024.30,587.42 1024.56,590.08 1024.82,579.44 1025.07,568.80 1025.33,592.74 1025.58,576.78 1025.84,584.76 1026.10,587.42 1026.35,568.80 1026.61,582.10 1026.86,563.48 1027.12,584.76 1027.38,574.12 1027.63,579.44 1027.89,584.76 1028.14,571.46 1028.40,579.44 1028.66,571.46 1028.91,579.44 1029.17,587.42 1029.42,579.44 1029.68,576.78 1029.94,568.80 1030.19,584.76 1030.45,579.44 1030.70,592.74 1030.96,571.46 1031.22,587.42 1031.47,595.40 1031.73,579.44 1031.98,568.80 1032.24,592.74 1032.50,587.42 1032.75,584.76 1033.01,587.42 1033.26,574.12 1033.52,584.76 1033.78,584.76 1034.03,571.46 1034.29,584.76 1034.54,574.12 1034.80,587.42 1035.06,590.08 1035.31,595.40 1035.57,560.82 1035.82,579.44 1036.08,576.78 1036.34,579.44 1036.59,576.78 1036.85,576.78 1037.10,560.82 1037.36,587.42 1037.62,592.74 1037.87,587.42 1038.13,590.08 1038.38,571.46 1038.64,571.46 1038.90,587.42 1039.15,590.08 1039.41,582.10 1039.66,566.14 1039.92,603.38 1040.18,574.12 1040.43,587.42 1040.69,568.80 1040.94,587.42 1041.20,579.44 1041.46,592.74 1041.71,587.42 1041.97,566.14 1042.22,571.46 1042.48,582.10 1042.74,584.76 1042.99,595.40 1043.25,582.10 1043.50,579.44 1043.76,579.44 1044.02,579.44 1044.27,587.42 1044.53,579.44 1044.78,579.44 1045.04,566.14 1045.30,560.82 1045.55,579.44 1045.81,584.76 1046.06,579.44 1046.32,582.10 1046.58,584.76 1046.83,579.44 1047.09,587.42 1047.34,571.46 1047.60,579.44 1047.86,576.78 1048.11,579.44 1048.37,584.76 1048.62,587.42 1048.88,579.44 1049.14,582.10 1049.39,576.78 1049.65,576.78 1049.90,590.08 1050.16,576.78 1050.42,590.08 1050.67,582.10 1050.93,579.44 1051.18,595.40 1051.44,576.78 1051.70,576.78 1051.95,579.44 1052.21,582.10 1052.46,582.10 1052.72,587.42 1052.98,579.44 1053.23,582.10 1053.49,576.78 1053.74,587.42 1054.00,576.78 1054.26,576.78 1054.51,579.44 1054.77,582.10 1055.02,574.12 1055.28,592.74 1055.54,574.12 1055.79,576.78 1056.05,574.12 1056.30,574.12 1056.56,584.76 1056.82,579.44 1057.07,571.46 1057.33,574.12 1057.58,576.78 1057.84,592.74 1058.10,574.12 1058.35,566.14 1058.61,568.80 1058.86,576.78 1059.12,592.74 1059.38,568.80 1059.63,579.44 1059.89,600.72 1060.14,574.12 1060.40,590.08 1060.66,590.08 1060.91,584.76 1061.17,566.14 1061.42,582.10 1061.68,574.12 1061.94,560.82 1062.19,563.48 1062.45,579.44 1062.70,579.44 1062.96,590.08 1063.22,584.76 1063.47,574.12 1063.73,574.12 1063.98,576.78 1064.24,568.80 1064.50,584.76 1064.75,579.44 1065.01,571.46 1065.26,571.46 1065.52,568.80 1065.78,574.12 1066.03,579.44 1066.29,574.12 1066.54,587.42 1066.80,592.74 1067.06,571.46 1067.31,579.44 1067.57,574.12 1067.82,592.74 1068.08,582.10 1068.34,582.10 1068.59,584.76 1068.85,598.06 1069.10,582.10 1069.36,568.80 1069.62,574.12 1069.87,582.10 1070.13,576.78 1070.38,571.46 1070.64,603.38 1070.90,579.44 1071.15,574.12 1071.41,571.46 1071.66,563.48 1071.92,568.80 1072.18,574.12 1072.43,574.12 1072.69,571.46 1072.94,582.10 1073.20,579.44 1073.46,568.80 1073.71,560.82 1073.97,579.44 1074.22,579.44 1074.48,576.78 1074.74,566.14 1074.99,579.44 1075.25,563.48 1075.50,587.42 1075.76,579.44 1076.02,579.44 1076.27,571.46 1076.53,568.80 1076.78,592.74 1077.04,587.42 1077.30,574.12 1077.55,584.76 1077.81,592.74 1078.06,568.80 1078.32,574.12 1078.58,574.12 1078.83,582.10 1079.09,568.80 1079.34,579.44 1079.60,568.80 1079.86,584.76 1080.11,584.76 1080.37,576.78 1080.62,584.76 1080.88,571.46 1081.14,576.78 1081.39,587.42 1081.65,576.78 1081.90,582.10 1082.16,568.80 1082.42,584.76 1082.67,582.10 1082.93,566.14 1083.18,558.16 1083.44,560.82 1083.70,576.78 1083.95,576.78 1084.21,563.48 1084.46,579.44 1084.72,587.42 1084.98,576.78 1085.23,574.12 1085.49,584.76 1085.74,592.74 1086.00,590.08 1086.26,571.46 1086.51,584.76 1086.77,579.44 1087.02,576.78 1087.28,571.46 1087.54,582.10 1087.79,574.12 1088.05,584.76 1088.30,582.10 1088.56,587.42 1088.82,568.80 1089.07,576.78 1089.33,584.76 1089.58,582.10 1089.84,579.44 1090.10,571.46 1090.35,592.74 1090.61,587.42 1090.86,582.10 1091.12,555.50 1091.38,568.80 1091.63,579.44 1091.89,571.46 1092.14,558.16 1092.40,579.44 1092.66,582.10 1092.91,566.14 1093.17,574.12 1093.42,571.46 1093.68,582.10 1093.94,560.82 1094.19,563.48 1094.45,571.46 1094.70,571.46 1094.96,595.40 1095.22,571.46 1095.47,579.44 1095.73,574.12 1095.98,571.46 1096.24,582.10 1096.50,592.74 1096.75,574.12 1097.01,584.76 1097.26,582.10 1097.52,582.10 1097.78,582.10 1098.03,598.06 1098.29,566.14 1098.54,576.78 1098.80,568.80 1099.06,560.82 1099.31,576.78 1099.57,595.40 1099.82,584.76 1100.08,590.08 1100.34,582.10 1100.59,576.78 1100.85,595.40 1101.10,574.12 1101.36,592.74 1101.62,574.12 1101.87,579.44 1102.13,579.44 1102.38,579.44 1102.64,582.10 1102.90,582.10 1103.15,592.74 1103.41,579.44 1103.66,560.82 1103.92,560.82 1104.18,566.14 1104.43,571.46 1104.69,584.76 1104.94,563.48 1105.20,579.44 1105.46,579.44 1105.71,579.44 1105.97,576.78 1106.22,582.10 1106.48,579.44 1106.74,587.42 1106.99,582.10 1107.25,558.16 1107.50,579.44 1107.76,579.44 1108.02,574.12 1108.27,571.46 1108.53,587.42 1108.78,579.44 1109.04,568.80 1109.30,574.12 1109.55,576.78 1109.81,563.48 1110.06,584.76 1110.32,576.78 1110.58,582.10 1110.83,563.48 1111.09,595.40 1111.34,584.76 1111.60,582.10 1111.86,571.46 1112.11,571.46 1112.37,566.14 1112.62,592.74 1112.88,571.46 1113.14,579.44 1113.39,584.76 1113.65,574.12 1113.90,587.42 1114.16,595.40 1114.42,582.10 1114.67,590.08 1114.93,584.76 1115.18,574.12 1115.44,574.12 1115.70,563.48 1115.95,579.44 1116.21,592.74 1116.46,584.76 1116.72,587.42 1116.98,590.08 1117.23,574.12 1117.49,584.76 1117.74,595.40 1118.00,571.46 1118.26,579.44 1118.51,574.12 1118.77,576.78 1119.02,571.46 1119.28,576.78 1119.54,566.14 1119.79,574.12 1120.05,574.12 1120.30,574.12 1120.56,590.08 1120.82,579.44 1121.07,579.44 1121.33,576.78 1121.58,590.08 1121.84,563.48 1122.10,576.78 1122.35,590.08 1122.61,592.74 1122.86,579.44 1123.12,579.44 1123.38,584.76 1123.63,576.78 1123.89,584.76 1124.14,574.12 1124.40,584.76 1124.66,579.44 1124.91,568.80 1125.17,555.50 1125.42,587.42 1125.68,582.10 1125.94,584.76 1126.19,571.46 1126.45,587.42 1126.70,582.10 1126.96,579.44 1127.22,587.42 1127.47,587.42 1127.73,582.10 1127.98,598.06 1128.24,590.08 1128.50,582.10 1128.75,576.78 1129.01,579.44 1129.26,592.74 1129.52,582.10 1129.78,571.46 1130.03,574.12 1130.29,579.44 1130.54,584.76 1130.80,571.46 1131.06,582.10 1131.31,587.42 1131.57,584.76 1131.82,563.48 1132.08,576.78 1132.34,566.14 1132.59,582.10 1132.85,568.80 1133.10,582.10 1133.36,579.44 1133.62,555.50 1133.87,571.46 1134.13,582.10 1134.38,579.44 1134.64,574.12 1134.90,566.14 1135.15,582.10 1135.41,592.74 1135.66,579.44 1135.92,576.78 1136.18,576.78 1136.43,566.14 1136.69,574.12 1136.94,571.46 1137.20,587.42 1137.46,568.80 1137.71,558.16 1137.97,571.46 1138.22,576.78 1138.48,576.78 1138.74,560.82 1138.99,587.42 1139.25,579.44 1139.50,574.12 1139.76,571.46 1140.02,582.10 1140.27,574.12 1140.53,579.44 1140.78,576.78 1141.04,579.44 1141.30,587.42 1141.55,576.78 1141.81,568.80 1142.06,587.42 1142.32,579.44 1142.58,571.46 1142.83,587.42 1143.09,576.78 1143.34,587.42 1143.60,568.80 1143.86,558.16 1144.11,560.82 1144.37,579.44 1144.62,571.46 1144.88,576.78 1145.14,576.78 1145.39,563.48 1145.65,590.08 1145.90,568.80 1146.16,579.44 1146.42,566.14 1146.67,576.78 1146.93,584.76 1147.18,574.12 1147.44,571.46 1147.70,576.78 1147.95,574.12 1148.21,582.10 1148.46,598.06 1148.72,568.80 1148.98,571.46 1149.23,576.78 1149.49,576.78 1149.74,568.80 1150.00,582.10 1150.26,584.76 1150.51,579.44 1150.77,566.14 1151.02,590.08 1151.28,566.14 1151.54,584.76 1151.79,587.42 1152.05,566.14 1152.30,579.44 1152.56,590.08 1152.82,582.10 1153.07,568.80 1153.33,566.14 1153.58,582.10 1153.84,574.12 1154.10,571.46 1154.35,584.76 1154.61,574.12 1154.86,579.44 1155.12,582.10 1155.38,582.10 1155.63,576.78 1155.89,576.78 1156.14,582.10 1156.40,582.10 1156.66,568.80 1156.91,576.78 1157.17,568.80 1157.42,566.14 1157.68,571.46 1157.94,558.16 1158.19,584.76 1158.45,571.46 1158.70,579.44 1158.96,560.82 1159.22,563.48 1159.47,595.40 1159.73,587.42 1159.98,571.46 1160.24,571.46 1160.50,571.46 1160.75,579.44 1161.01,574.12 1161.26,571.46 1161.52,579.44 1161.78,568.80 1162.03,598.06 1162.29,571.46 1162.54,587.42 1162.80,568.80 1163.06,579.44 1163.31,584.76 1163.57,574.12 1163.82,584.76 1164.08,587.42 1164.34,592.74 1164.59,576.78 1164.85,574.12 1165.10,568.80 1165.36,579.44 1165.62,568.80 1165.87,576.78 1166.13,579.44 1166.38,571.46 1166.64,568.80 1166.90,582.10 1167.15,579.44 1167.41,579.44 1167.66,576.78 1167.92,584.76 1168.18,568.80 1168.43,582.10 1168.69,574.12 1168.94,584.76 1169.20,574.12 1169.46,574.12 1169.71,582.10 1169.97,560.82 1170.22,574.12 1170.48,560.82 1170.74,568.80 1170.99,584.76 1171.25,582.10 1171.50,574.12 1171.76,576.78 1172.02,576.78 1172.27,579.44 1172.53,595.40 1172.78,579.44 1173.04,598.06 1173.30,574.12 1173.55,584.76 1173.81,584.76 1174.06,579.44 1174.32,574.12 1174.58,590.08 1174.83,592.74 1175.09,587.42 1175.34,595.40 1175.60,587.42 1175.86,563.48 1176.11,587.42 1176.37,571.46 1176.62,590.08 1176.88,574.12 1177.14,579.44 1177.39,579.44 1177.65,571.46 1177.90,560.82 1178.16,576.78 1178.42,576.78 1178.67,587.42 1178.93,571.46 1179.18,579.44 1179.44,571.46 1179.70,579.44 1179.95,560.82 1180.21,595.40 1180.46,579.44 1180.72,568.80 1180.98,582.10 1181.23,584.76 1181.49,579.44 1181.74,590.08 1182.00,576.78" fill="none" stroke="#0000ff" stroke-width="1.7" stroke-linejoin="round"/>
<rect x="911.00" y="516.80" width="274.00" height="120.00" fill="none" stroke="#000" stroke-width="1.5" stroke-linejoin="miter"/>
<line x1="913.20" y1="636.80" x2="913.20" y2="643.60" stroke="#000" stroke-width="1.5" />
<text x="910.02" y="660.49" font-size="10.50" textLength="6.36" lengthAdjust="spacingAndGlyphs" fill="#000">0</text>
<line x1="964.40" y1="636.80" x2="964.40" y2="643.60" stroke="#000" stroke-width="1.5" />
<text x="954.82" y="660.49" font-size="10.50" textLength="19.09" lengthAdjust="spacingAndGlyphs" fill="#000">200</text>
<line x1="1015.60" y1="636.80" x2="1015.60" y2="643.60" stroke="#000" stroke-width="1.5" />
<text x="1006.14" y="660.49" font-size="10.50" textLength="19.09" lengthAdjust="spacingAndGlyphs" fill="#000">400</text>
<line x1="1066.80" y1="636.80" x2="1066.80" y2="643.60" stroke="#000" stroke-width="1.5" />
<text x="1057.24" y="660.49" font-size="10.50" textLength="19.09" lengthAdjust="spacingAndGlyphs" fill="#000">600</text>
<line x1="1118.00" y1="636.80" x2="1118.00" y2="643.60" stroke="#000" stroke-width="1.5" />
<text x="1108.45" y="660.49" font-size="10.50" textLength="19.09" lengthAdjust="spacingAndGlyphs" fill="#000">800</text>
<line x1="1169.20" y1="636.80" x2="1169.20" y2="643.60" stroke="#000" stroke-width="1.5" />
<text x="1156.26" y="660.49" font-size="10.50" textLength="25.45" lengthAdjust="spacingAndGlyphs" fill="#000">1000</text>
<line x1="904.20" y1="622.00" x2="911.00" y2="622.00" stroke="#000" stroke-width="1.5" />
<text x="876.78" y="626.35" font-size="10.50" textLength="19.09" lengthAdjust="spacingAndGlyphs" fill="#000">960</text>
<line x1="904.20" y1="595.40" x2="911.00" y2="595.40" stroke="#000" stroke-width="1.5" />
<text x="876.78" y="599.75" font-size="10.50" textLength="19.09" lengthAdjust="spacingAndGlyphs" fill="#000">970</text>
<line x1="904.20" y1="568.80" x2="911.00" y2="568.80" stroke="#000" stroke-width="1.5" />
<text x="876.78" y="573.14" font-size="10.50" textLength="19.09" lengthAdjust="spacingAndGlyphs" fill="#000">980</text>
<line x1="904.20" y1="542.20" x2="911.00" y2="542.20" stroke="#000" stroke-width="1.5" />
<text x="876.78" y="546.54" font-size="10.50" textLength="19.09" lengthAdjust="spacingAndGlyphs" fill="#000">990</text>
<text x="1043.95" y="678.20" font-size="10.92" textLength="7.12" lengthAdjust="spacingAndGlyphs" fill="#000">X</text>
<g transform="translate(866.10,577.80) rotate(-90)"><text x="-17.41" y="0" font-size="10.92" textLength="34.76" lengthAdjust="spacingAndGlyphs" fill="#000">counts</text></g>
<g transform="translate(1193.60,575.20) rotate(90)"><text x="-19.43" y="0" font-size="10.92" textLength="38.63" lengthAdjust="spacingAndGlyphs" fill="#000">cut in x</text></g>
<rect x="1108.8" y="519.8" width="72.9" height="16.1" rx="1.5" fill="#fff" fill-opacity="0.8" stroke="#cccccc" stroke-width="1.0"/>
<line x1="1111.20" y1="527.80" x2="1133.60" y2="527.80" stroke="#0000ff" stroke-width="1.7" />
<text x="1138.20" y="530.80" font-size="10.50" textLength="39.75" lengthAdjust="spacingAndGlyphs" fill="#000">y=1000</text>
<polyline points="912.00,748.94 912.14,735.54 912.27,738.22 912.41,754.30 912.54,751.62 912.68,754.30 912.81,743.58 912.95,748.94 913.08,740.90 913.22,767.70 913.36,732.86 913.49,748.94 913.63,743.58 913.76,748.94 913.90,751.62 914.03,743.58 914.17,740.90 914.30,751.62 914.44,751.62 914.57,743.58 914.71,756.98 914.85,762.34 914.98,746.26 915.12,754.30 915.25,767.70 915.39,756.98 915.52,754.30 915.66,759.66 915.79,762.34 915.93,748.94 916.07,740.90 916.20,751.62 916.34,756.98 916.47,746.26 916.61,740.90 916.74,751.62 916.88,743.58 917.01,738.22 917.15,751.62 917.28,756.98 917.42,746.26 917.56,746.26 917.69,738.22 917.83,762.34 917.96,754.30 918.10,756.98 918.23,765.02 918.37,748.94 918.50,743.58 918.64,756.98 918.77,735.54 918.91,740.90 919.05,743.58 919.18,746.26 919.32,740.90 919.45,762.34 919.59,743.58 919.72,743.58 919.86,765.02 919.99,746.26 920.13,751.62 920.27,740.90 920.40,754.30 920.54,748.94 920.67,746.26 920.81,756.98 920.94,743.58 921.08,748.94 921.21,743.58 921.35,754.30 921.49,738.22 921.62,743.58 921.76,751.62 921.89,743.58 922.03,735.54 922.16,732.86 922.30,765.02 922.43,740.90 922.57,743.58 922.70,748.94 922.84,759.66 922.98,735.54 923.11,762.34 923.25,743.58 923.38,735.54 923.52,765.02 923.65,751.62 923.79,762.34 923.92,746.26 924.06,735.54 924.20,730.18 924.33,765.02 924.47,754.30 924.60,740.90 924.74,732.86 924.87,743.58 925.01,756.98 925.14,746.26 925.28,748.94 925.41,751.62 925.55,756.98 925.69,746.26 925.82,746.26 925.96,748.94 926.09,751.62 926.23,762.34 926.36,754.30 926.50,738.22 926.63,751.62 926.77,762.34 926.90,735.54 927.04,743.58 927.18,727.50 927.31,748.94 927.45,754.30 927.58,762.34 927.72,735.54 927.85,724.82 927.99,756.98 928.12,754.30 928.26,743.58 928.40,756.98 928.53,751.62 928.67,751.62 928.80,746.26 928.94,738.22 929.07,748.94 929.21,740.90 929.34,754.30 929.48,746.26 929.62,770.38 929.75,762.34 929.89,740.90 930.02,754.30 930.16,743.58 930.29,743.58 930.43,735.54 930.56,740.90 930.70,738.22 930.83,748.94 930.97,756.98 931.11,756.98 931.24,754.30 931.38,759.66 931.51,754.30 931.65,748.94 931.78,746.26 931.92,751.62 932.05,767.70 932.19,748.94 932.33,746.26 932.46,738.22 932.60,743.58 932.73,754.30 932.87,756.98 933.00,730.18 933.14,740.90 933.27,730.18 933.41,727.50 933.54,756.98 933.68,746.26 933.82,743.58 933.95,743.58 934.09,743.58 934.22,746.26 934.36,746.26 934.49,762.34 934.63,751.62 934.76,756.98 934.90,748.94 935.03,754.30 935.17,743.58 935.31,740.90 935.44,746.26 935.58,746.26 935.71,748.94 935.85,754.30 935.98,751.62 936.12,754.30 936.25,746.26 936.39,748.94 936.53,743.58 936.66,762.34 936.80,740.90 936.93,756.98 937.07,756.98 937.20,751.62 937.34,754.30 937.47,746.26 937.61,754.30 937.75,759.66 937.88,756.98 938.02,735.54 938.15,748.94 938.29,759.66 938.42,748.94 938.56,765.02 938.69,732.86 938.83,762.34 938.96,743.58 939.10,743.58 939.24,762.34 939.37,746.26 939.51,738.22 939.64,743.58 939.78,746.26 939.91,740.90 940.05,746.26 940.18,746.26 940.32,748.94 940.46,743.58 940.59,756.98 940.73,740.90 940.86,754.30 941.00,759.66 941.13,746.26 941.27,732.86 941.40,740.90 941.54,754.30 941.67,740.90 941.81,754.30 941.95,748.94 942.08,748.94 942.22,770.38 942.35,746.26 942.49,759.66 942.62,756.98 942.76,762.34 942.89,762.34 943.03,756.98 943.16,740.90 943.30,732.86 943.44,748.94 943.57,738.22 943.71,751.62 943.84,767.70 943.98,746.26 944.11,743.58 944.25,754.30 944.38,746.26 944.52,743.58 944.66,756.98 944.79,762.34 944.93,751.62 945.06,751.62 945.20,751.62 945.33,738.22 945.47,732.86 945.60,751.62 945.74,740.90 945.88,740.90 946.01,740.90 946.15,738.22 946.28,751.62 946.42,740.90 946.55,730.18 946.69,740.90 946.82,754.30 946.96,743.58 947.09,735.54 947.23,746.26 947.37,754.30 947.50,732.86 947.64,759.66 947.77,743.58 947.91,748.94 948.04,759.66 948.18,738.22 948.31,746.26 948.45,759.66 948.59,743.58 948.72,754.30 948.86,767.70 948.99,754.30 949.13,746.26 949.26,743.58 949.40,746.26 949.53,748.94 949.67,743.58 949.80,751.62 949.94,738.22 950.08,746.26 950.21,746.26 950.35,743.58 950.48,759.66 950.62,756.98 950.75,732.86 950.89,746.26 951.02,751.62 951.16,746.26 951.29,754.30 951.43,746.26 951.57,754.30 951.70,746.26 951.84,765.02 951.97,735.54 952.11,754.30 952.24,765.02 952.38,751.62 952.51,751.62 952.65,746.26 952.79,759.66 952.92,746.26 953.06,714.10 953.19,762.34 953.33,746.26 953.46,751.62 953.60,746.26 953.73,767.70 953.87,759.66 954.00,743.58 954.14,748.94 954.28,732.86 954.41,756.98 954.55,746.26 954.68,722.14 954.82,756.98 954.95,756.98 955.09,748.94 955.22,748.94 955.36,740.90 955.50,748.94 955.63,756.98 955.77,746.26 955.90,724.82 956.04,735.54 956.17,775.74 956.31,751.62 956.44,756.98 956.58,743.58 956.72,751.62 956.85,730.18 956.99,740.90 957.12,740.90 957.26,746.26 957.39,748.94 957.53,746.26 957.66,735.54 957.80,743.58 957.93,751.62 958.07,735.54 958.21,746.26 958.34,748.94 958.48,756.98 958.61,754.30 958.75,754.30 958.88,775.74 959.02,738.22 959.15,743.58 959.29,751.62 959.42,738.22 959.56,743.58 959.70,746.26 959.83,773.06 959.97,751.62 960.10,743.58 960.24,732.86 960.37,730.18 960.51,735.54 960.64,759.66 960.78,770.38 960.92,743.58 961.05,748.94 961.19,740.90 961.32,748.94 961.46,746.26 961.59,762.34 961.73,743.58 961.86,754.30 962.00,746.26 962.13,743.58 962.27,748.94 962.41,746.26 962.54,748.94 962.68,740.90 962.81,743.58 962.95,754.30 963.08,754.30 963.22,732.86 963.35,748.94 963.49,738.22 963.63,746.26 963.76,754.30 963.90,756.98 964.03,748.94 964.17,746.26 964.30,743.58 964.44,762.34 964.57,754.30 964.71,748.94 964.85,732.86 964.98,770.38 965.12,743.58 965.25,754.30 965.39,743.58 965.52,754.30 965.66,746.26 965.79,732.86 965.93,746.26 966.06,743.58 966.20,746.26 966.34,756.98 966.47,743.58 966.61,751.62 966.74,756.98 966.88,748.94 967.01,751.62 967.15,740.90 967.28,748.94 967.42,754.30 967.56,735.54 967.69,738.22 967.83,735.54 967.96,743.58 968.10,748.94 968.23,754.30 968.37,751.62 968.50,740.90 968.64,748.94 968.77,762.34 968.91,748.94 969.05,762.34 969.18,746.26 969.32,759.66 969.45,762.34 969.59,748.94 969.72,748.94 969.86,765.02 969.99,740.90 970.13,727.50 970.26,762.34 970.40,730.18 970.54,754.30 970.67,754.30 970.81,751.62 970.94,762.34 971.08,735.54 971.21,743.58 971.35,756.98 971.48,751.62 971.62,762.34 971.76,751.62 971.89,740.90 972.03,765.02 972.16,754.30 972.30,746.26 972.43,738.22 972.57,735.54 972.70,754.30 972.84,756.98 972.98,743.58 973.11,751.62 973.25,751.62 973.38,738.22 973.52,732.86 973.65,746.26 973.79,751.62 973.92,743.58 974.06,767.70 974.19,748.94 974.33,759.66 974.47,724.82 974.60,740.90 974.74,746.26 974.87,751.62 975.01,773.06 975.14,740.90 975.28,732.86 975.41,756.98 975.55,743.58 975.68,740.90 975.82,765.02 975.96,740.90 976.09,735.54 976.23,746.26 976.36,748.94 976.50,740.90 976.63,765.02 976.77,748.94 976.90,738.22 977.04,759.66 977.18,738.22 977.31,754.30 977.45,767.70 977.58,748.94 977.72,756.98 977.85,746.26 977.99,759.66 978.12,738.22 978.26,756.98 978.39,746.26 978.53,754.30 978.67,751.62 978.80,738.22 978.94,746.26 979.07,751.62 979.21,762.34 979.34,738.22 979.48,740.90 979.61,751.62 979.75,746.26 979.89,759.66 980.02,759.66 980.16,756.98 980.29,746.26 980.43,746.26 980.56,756.98 980.70,740.90 980.83,740.90 980.97,746.26 981.11,738.22 981.24,751.62 981.38,748.94 981.51,743.58 981.65,748.94 981.78,740.90 981.92,762.34 982.05,735.54 982.19,756.98 982.32,751.62 982.46,762.34 982.60,743.58 982.73,735.54 982.87,738.22 983.00,740.90 983.14,765.02 983.27,756.98 983.41,754.30 983.54,756.98 983.68,738.22 983.82,746.26 983.95,748.94 984.09,743.58 984.22,756.98 984.36,756.98 984.49,756.98 984.63,743.58 984.76,746.26 984.90,743.58 985.03,738.22 985.17,762.34 985.31,754.30 985.44,746.26 985.58,762.34 985.71,754.30 985.85,738.22 985.98,738.22 986.12,738.22 986.25,748.94 986.39,751.62 986.52,738.22 986.66,751.62 986.80,746.26 986.93,735.54 987.07,751.62 987.20,754.30 987.34,748.94 987.47,743.58 987.61,743.58 987.74,746.26 987.88,743.58 988.02,765.02 988.15,756.98 988.29,746.26 988.42,756.98 988.56,762.34 988.69,759.66 988.83,756.98 988.96,751.62 989.10,759.66 989.24,746.26 989.37,732.86 989.51,751.62 989.64,735.54 989.78,746.26 989.91,759.66 990.05,751.62 990.18,759.66 990.32,740.90 990.45,759.66 990.59,735.54 990.73,743.58 990.86,767.70 991.00,740.90 991.13,732.86 991.27,756.98 991.40,738.22 991.54,765.02 991.67,746.26 991.81,765.02 991.95,743.58 992.08,765.02 992.22,773.06 992.35,746.26 992.49,727.50 992.62,754.30 992.76,740.90 992.89,748.94 993.03,751.62 993.16,743.58 993.30,732.86 993.44,759.66 993.57,743.58 993.71,746.26 993.84,762.34 993.98,732.86 994.11,730.18 994.25,756.98 994.38,732.86 994.52,748.94 994.65,751.62 994.79,735.54 994.93,746.26 995.06,746.26 995.20,735.54 995.33,735.54 995.47,740.90 995.60,762.34 995.74,765.02 995.87,738.22 996.01,756.98 996.15,746.26 996.28,759.66 996.42,751.62 996.55,762.34 996.69,732.86 996.82,759.66 996.96,748.94 997.09,751.62 997.23,738.22 997.37,762.34 997.50,748.94 997.64,751.62 997.77,743.58 997.91,743.58 998.04,754.30 998.18,746.26 998.31,751.62 998.45,743.58 998.58,748.94 998.72,754.30 998.86,748.94 998.99,746.26 999.13,727.50 999.26,754.30 999.40,746.26 999.53,735.54 999.67,767.70 999.80,765.02 999.94,759.66 1000.08,748.94 1000.21,724.82 1000.35,746.26 1000.48,738.22 1000.62,751.62 1000.75,773.06 1000.89,770.38 1001.02,738.22 1001.16,746.26 1001.29,762.34 1001.43,738.22 1001.57,765.02 1001.70,738.22 1001.84,735.54 1001.97,756.98 1002.11,759.66 1002.24,740.90 1002.38,759.66 1002.51,740.90 1002.65,759.66 1002.78,740.90 1002.92,748.94 1003.06,754.30 1003.19,756.98 1003.33,746.26 1003.46,767.70 1003.60,751.62 1003.73,751.62 1003.87,743.58 1004.00,762.34 1004.14,732.86 1004.28,751.62 1004.41,759.66 1004.55,735.54 1004.68,732.86 1004.82,751.62 1004.95,756.98 1005.09,748.94 1005.22,754.30 1005.36,751.62 1005.50,732.86 1005.63,746.26 1005.77,746.26 1005.90,746.26 1006.04,748.94 1006.17,740.90 1006.31,740.90 1006.44,751.62 1006.58,748.94 1006.71,724.82 1006.85,743.58 1006.99,751.62 1007.12,730.18 1007.26,748.94 1007.39,759.66 1007.53,743.58 1007.66,756.98 1007.80,754.30 1007.93,746.26 1008.07,748.94 1008.21,756.98 1008.34,754.30 1008.48,754.30 1008.61,738.22 1008.75,756.98 1008.88,754.30 1009.02,730.18 1009.15,754.30 1009.29,735.54 1009.42,735.54 1009.56,751.62 1009.70,762.34 1009.83,743.58 1009.97,743.58 1010.10,740.90 1010.24,748.94 1010.37,738.22 1010.51,735.54 1010.64,759.66 1010.78,735.54 1010.91,746.26 1011.05,754.30 1011.19,751.62 1011.32,730.18 1011.46,738.22 1011.59,765.02 1011.73,748.94 1011.86,751.62 1012.00,751.62 1012.13,754.30 1012.27,762.34 1012.41,740.90 1012.54,756.98 1012.68,751.62 1012.81,754.30 1012.95,756.98 1013.08,740.90 1013.22,746.26 1013.35,754.30 1013.49,756.98 1013.62,754.30 1013.76,740.90 1013.90,748.94 1014.03,746.26 1014.17,751.62 1014.30,751.62 1014.44,746.26 1014.57,767.70 1014.71,732.86 1014.84,756.98 1014.98,754.30 1015.12,735.54 1015.25,746.26 1015.39,748.94 1015.52,754.30 1015.66,765.02 1015.79,746.26 1015.93,738.22 1016.06,756.98 1016.20,735.54 1016.34,759.66 1016.47,756.98 1016.61,743.58 1016.74,748.94 1016.88,743.58 1017.01,756.98 1017.15,759.66 1017.28,767.70 1017.42,759.66 1017.55,759.66 1017.69,762.34 1017.83,746.26 1017.96,754.30 1018.10,767.70 1018.23,724.82 1018.37,756.98 1018.50,762.34 1018.64,738.22 1018.77,738.22 1018.91,759.66 1019.04,762.34 1019.18,759.66 1019.32,738.22 1019.45,751.62 1019.59,756.98 1019.72,748.94 1019.86,738.22 1019.99,762.34 1020.13,751.62 1020.26,762.34 1020.40,727.50 1020.54,730.18 1020.67,740.90 1020.81,748.94 1020.94,743.58 1021.08,770.38 1021.21,746.26 1021.35,762.34 1021.48,762.34 1021.62,756.98 1021.75,751.62 1021.89,743.58 1022.03,740.90 1022.16,746.26 1022.30,756.98 1022.43,743.58 1022.57,748.94 1022.70,738.22 1022.84,756.98 1022.97,775.74 1023.11,754.30 1023.25,727.50 1023.38,743.58 1023.52,751.62 1023.65,740.90 1023.79,743.58 1023.92,743.58 1024.06,754.30 1024.19,748.94 1024.33,746.26 1024.46,754.30 1024.60,759.66 1024.74,746.26 1024.87,740.90 1025.01,743.58 1025.14,743.58 1025.28,743.58 1025.41,724.82 1025.55,746.26 1025.68,738.22 1025.82,730.18 1025.96,748.94 1026.09,746.26 1026.23,738.22 1026.36,732.86 1026.50,746.26 1026.63,746.26 1026.77,748.94 1026.90,759.66 1027.04,738.22 1027.17,751.62 1027.31,765.02 1027.45,751.62 1027.58,765.02 1027.72,759.66 1027.85,748.94 1027.99,756.98 1028.12,738.22 1028.26,762.34 1028.39,746.26 1028.53,743.58 1028.67,735.54 1028.80,740.90 1028.94,746.26 1029.07,748.94 1029.21,748.94 1029.34,738.22 1029.48,754.30 1029.61,743.58 1029.75,748.94 1029.88,746.26 1030.02,751.62 1030.16,727.50 1030.29,754.30 1030.43,746.26 1030.56,746.26 1030.70,743.58 1030.83,743.58 1030.97,743.58 1031.10,738.22 1031.24,762.34 1031.38,748.94 1031.51,759.66 1031.65,746.26 1031.78,759.66 1031.92,756.98 1032.05,748.94 1032.19,735.54 1032.32,743.58 1032.46,746.26 1032.60,735.54 1032.73,756.98 1032.87,767.70 1033.00,751.62 1033.14,751.62 1033.27,738.22 1033.41,727.50 1033.54,762.34 1033.68,724.82 1033.81,732.86 1033.95,740.90 1034.09,746.26 1034.22,724.82 1034.36,748.94 1034.49,754.30 1034.63,746.26 1034.76,762.34 1034.90,743.58 1035.03,748.94 1035.17,746.26 1035.31,746.26 1035.44,759.66 1035.58,735.54 1035.71,759.66 1035.85,740.90 1035.98,765.02 1036.12,746.26 1036.25,756.98 1036.39,748.94 1036.52,754.30 1036.66,770.38 1036.80,759.66 1036.93,748.94 1037.07,743.58 1037.20,762.34 1037.34,770.38 1037.47,756.98 1037.61,751.62 1037.74,754.30 1037.88,756.98 1038.02,740.90 1038.15,738.22 1038.29,740.90 1038.42,756.98 1038.56,748.94 1038.69,751.62 1038.83,762.34 1038.96,740.90 1039.10,748.94 1039.23,754.30 1039.37,735.54 1039.51,740.90 1039.64,740.90 1039.78,738.22 1039.91,740.90 1040.05,762.34 1040.18,751.62 1040.32,738.22 1040.45,756.98 1040.59,748.94 1040.72,746.26 1040.86,735.54 1041.00,735.54 1041.13,740.90 1041.27,751.62 1041.40,740.90 1041.54,743.58 1041.67,751.62 1041.81,735.54 1041.94,743.58 1042.08,756.98 1042.22,735.54 1042.35,751.62 1042.49,743.58 1042.62,762.34 1042.76,748.94 1042.89,756.98 1043.03,756.98 1043.16,767.70 1043.30,727.50 1043.43,751.62 1043.57,746.26 1043.71,738.22 1043.84,748.94 1043.98,743.58 1044.11,762.34 1044.25,746.26 1044.38,751.62 1044.52,743.58 1044.65,746.26 1044.79,762.34 1044.93,767.70 1045.06,759.66 1045.20,740.90 1045.33,743.58 1045.47,746.26 1045.60,767.70 1045.74,775.74 1045.87,754.30 1046.01,751.62 1046.14,754.30 1046.28,746.26 1046.42,751.62 1046.55,759.66 1046.69,756.98 1046.82,746.26 1046.96,748.94 1047.09,748.94 1047.23,727.50 1047.36,751.62 1047.50,748.94 1047.64,759.66 1047.77,751.62 1047.91,743.58 1048.04,743.58 1048.18,751.62 1048.31,746.26 1048.45,748.94 1048.58,767.70 1048.72,781.10 1048.86,727.50 1048.99,740.90 1049.13,748.94 1049.26,765.02 1049.40,762.34 1049.53,735.54 1049.67,775.74 1049.80,751.62 1049.94,740.90 1050.07,746.26 1050.21,740.90 1050.35,748.94 1050.48,724.82 1050.62,759.66 1050.75,762.34 1050.89,746.26 1051.02,735.54 1051.16,748.94 1051.29,738.22 1051.43,754.30 1051.57,759.66 1051.70,735.54 1051.84,732.86 1051.97,732.86 1052.11,754.30 1052.24,759.66 1052.38,759.66 1052.51,751.62 1052.65,743.58 1052.78,743.58 1052.92,762.34 1053.06,746.26 1053.19,748.94 1053.33,748.94 1053.46,748.94 1053.60,751.62 1053.73,743.58 1053.87,748.94 1054.00,746.26 1054.14,754.30 1054.28,746.26 1054.41,748.94 1054.55,770.38 1054.68,743.58 1054.82,751.62 1054.95,740.90 1055.09,751.62 1055.22,748.94 1055.36,746.26 1055.49,748.94 1055.63,754.30 1055.77,765.02 1055.90,730.18 1056.04,765.02 1056.17,751.62 1056.31,743.58 1056.44,746.26 1056.58,743.58 1056.71,740.90 1056.85,735.54 1056.99,746.26 1057.12,722.14 1057.26,759.66 1057.39,746.26 1057.53,751.62 1057.66,754.30 1057.80,746.26 1057.93,735.54 1058.07,756.98 1058.20,756.98 1058.34,740.90 1058.48,743.58 1058.61,730.18 1058.75,738.22 1058.88,746.26 1059.02,751.62 1059.15,746.26 1059.29,751.62 1059.42,762.34 1059.56,748.94 1059.69,751.62 1059.83,751.62 1059.97,754.30 1060.10,732.86 1060.24,740.90 1060.37,740.90 1060.51,754.30 1060.64,759.66 1060.78,751.62 1060.91,746.26 1061.05,751.62 1061.19,751.62 1061.32,740.90 1061.46,746.26 1061.59,759.66 1061.73,754.30 1061.86,754.30 1062.00,746.26 1062.13,759.66 1062.27,751.62 1062.40,743.58 1062.54,748.94 1062.68,756.98 1062.81,754.30 1062.95,748.94 1063.08,743.58 1063.22,740.90 1063.35,751.62 1063.49,762.34 1063.62,735.54 1063.76,746.26 1063.90,746.26 1064.03,746.26 1064.17,759.66 1064.30,751.62 1064.44,746.26 1064.57,738.22 1064.71,748.94 1064.84,778.42 1064.98,751.62 1065.12,746.26 1065.25,735.54 1065.39,740.90 1065.52,724.82 1065.66,735.54 1065.79,735.54 1065.93,740.90 1066.06,762.34 1066.20,740.90 1066.33,743.58 1066.47,754.30 1066.61,743.58 1066.74,743.58 1066.88,754.30 1067.01,748.94 1067.15,751.62 1067.28,746.26 1067.42,754.30 1067.55,743.58 1067.69,767.70 1067.83,751.62 1067.96,765.02 1068.10,754.30 1068.23,743.58 1068.37,748.94 1068.50,748.94 1068.64,748.94 1068.77,732.86 1068.91,759.66 1069.04,740.90 1069.18,762.34 1069.32,754.30 1069.45,746.26 1069.59,756.98 1069.72,746.26 1069.86,740.90 1069.99,759.66 1070.13,748.94 1070.26,751.62 1070.40,767.70 1070.54,751.62 1070.67,756.98 1070.81,735.54 1070.94,756.98 1071.08,732.86 1071.21,754.30 1071.35,730.18 1071.48,743.58 1071.62,743.58 1071.75,740.90 1071.89,740.90 1072.03,735.54 1072.16,732.86 1072.30,751.62 1072.43,762.34 1072.57,775.74 1072.70,751.62 1072.84,740.90 1072.97,746.26 1073.11,748.94 1073.24,751.62 1073.38,754.30 1073.52,751.62 1073.65,746.26 1073.79,765.02 1073.92,740.90 1074.06,762.34 1074.19,751.62 1074.33,754.30 1074.46,751.62 1074.60,759.66 1074.74,759.66 1074.87,751.62 1075.01,759.66 1075.14,724.82 1075.28,754.30 1075.41,754.30 1075.55,754.30 1075.68,759.66 1075.82,773.06 1075.95,751.62 1076.09,746.26 1076.23,762.34 1076.36,748.94 1076.50,759.66 1076.63,748.94 1076.77,746.26 1076.90,743.58 1077.04,743.58 1077.17,756.98 1077.31,740.90 1077.45,754.30 1077.58,746.26 1077.72,740.90 1077.85,751.62 1077.99,762.34 1078.12,743.58 1078.26,759.66 1078.39,756.98 1078.53,759.66 1078.66,740.90 1078.80,751.62 1078.94,770.38 1079.07,740.90 1079.21,730.18 1079.34,732.86 1079.48,754.30 1079.61,748.94 1079.75,743.58 1079.88,740.90 1080.02,748.94 1080.16,759.66 1080.29,740.90 1080.43,743.58 1080.56,762.34 1080.70,751.62 1080.83,746.26 1080.97,748.94 1081.10,743.58 1081.24,740.90 1081.38,743.58 1081.51,748.94 1081.65,762.34 1081.78,743.58 1081.92,735.54 1082.05,730.18 1082.19,748.94 1082.32,748.94 1082.46,735.54 1082.59,735.54 1082.73,746.26 1082.87,740.90 1083.00,756.98 1083.14,743.58 1083.27,756.98 1083.41,751.62 1083.54,748.94 1083.68,754.30 1083.81,770.38 1083.95,756.98 1084.09,746.26 1084.22,748.94 1084.36,751.62 1084.49,746.26 1084.63,743.58 1084.76,740.90 1084.90,756.98 1085.03,748.94 1085.17,751.62 1085.30,756.98 1085.44,762.34 1085.58,748.94 1085.71,756.98 1085.85,727.50 1085.98,748.94 1086.12,751.62 1086.25,751.62 1086.39,730.18 1086.52,756.98 1086.66,751.62 1086.80,756.98 1086.93,751.62 1087.07,748.94 1087.20,738.22 1087.34,762.34 1087.47,748.94 1087.61,732.86 1087.74,754.30 1087.88,751.62 1088.01,756.98 1088.15,773.06 1088.29,748.94 1088.42,738.22 1088.56,754.30 1088.69,767.70 1088.83,746.26 1088.96,748.94 1089.10,738.22 1089.23,740.90 1089.37,751.62 1089.51,746.26 1089.64,767.70 1089.78,738.22 1089.91,746.26 1090.05,738.22 1090.18,738.22 1090.32,751.62 1090.45,751.62 1090.59,756.98 1090.72,770.38 1090.86,751.62 1091.00,748.94 1091.13,759.66 1091.27,740.90 1091.40,748.94 1091.54,743.58 1091.67,756.98 1091.81,765.02 1091.94,740.90 1092.08,743.58 1092.21,748.94 1092.35,754.30 1092.49,751.62 1092.62,751.62 1092.76,754.30 1092.89,767.70 1093.03,740.90 1093.16,762.34 1093.30,751.62 1093.43,751.62 1093.57,746.26 1093.71,765.02 1093.84,738.22 1093.98,743.58 1094.11,740.90 1094.25,735.54 1094.38,756.98 1094.52,778.42 1094.65,746.26 1094.79,735.54 1094.92,738.22 1095.06,754.30 1095.20,748.94 1095.33,746.26 1095.47,767.70 1095.60,754.30 1095.74,754.30 1095.87,732.86 1096.01,754.30 1096.14,732.86 1096.28,748.94 1096.42,765.02 1096.55,727.50 1096.69,759.66 1096.82,743.58 1096.96,732.86 1097.09,754.30 1097.23,759.66 1097.36,738.22 1097.50,748.94 1097.63,759.66 1097.77,759.66 1097.91,751.62 1098.04,740.90 1098.18,751.62 1098.31,743.58 1098.45,732.86 1098.58,735.54 1098.72,735.54 1098.85,738.22 1098.99,765.02 1099.13,738.22 1099.26,746.26 1099.40,748.94 1099.53,759.66 1099.67,765.02 1099.80,759.66 1099.94,748.94 1100.07,759.66 1100.21,756.98 1100.35,754.30 1100.48,743.58 1100.62,751.62 1100.75,751.62 1100.89,735.54 1101.02,751.62 1101.16,743.58 1101.29,759.66 1101.43,746.26 1101.56,748.94 1101.70,746.26 1101.84,754.30 1101.97,759.66 1102.11,751.62 1102.24,754.30 1102.38,738.22 1102.51,740.90 1102.65,759.66 1102.78,743.58 1102.92,754.30 1103.06,743.58 1103.19,754.30 1103.33,762.34 1103.46,738.22 1103.60,743.58 1103.73,759.66 1103.87,767.70 1104.00,754.30 1104.14,759.66 1104.27,751.62 1104.41,743.58 1104.55,735.54 1104.68,751.62 1104.82,735.54 1104.95,738.22 1105.09,754.30 1105.22,765.02 1105.36,740.90 1105.49,743.58 1105.63,727.50 1105.77,735.54 1105.90,740.90 1106.04,732.86 1106.17,759.66 1106.31,746.26 1106.44,751.62 1106.58,732.86 1106.71,743.58 1106.85,778.42 1106.98,735.54 1107.12,756.98 1107.26,740.90 1107.39,754.30 1107.53,746.26 1107.66,743.58 1107.80,746.26 1107.93,756.98 1108.07,735.54 1108.20,746.26 1108.34,748.94 1108.47,740.90 1108.61,754.30 1108.75,730.18 1108.88,746.26 1109.02,746.26 1109.15,746.26 1109.29,756.98 1109.42,759.66 1109.56,746.26 1109.69,746.26 1109.83,735.54 1109.97,743.58 1110.10,759.66 1110.24,743.58 1110.37,740.90 1110.51,738.22 1110.64,746.26 1110.78,759.66 1110.91,738.22 1111.05,756.98 1111.18,743.58 1111.32,765.02 1111.46,740.90 1111.59,756.98 1111.73,738.22 1111.86,732.86 1112.00,738.22 1112.13,759.66 1112.27,756.98 1112.40,756.98 1112.54,743.58 1112.68,746.26 1112.81,746.26 1112.95,746.26 1113.08,743.58 1113.22,743.58 1113.35,732.86 1113.49,748.94 1113.62,746.26 1113.76,767.70 1113.89,762.34 1114.03,754.30 1114.17,759.66 1114.30,746.26 1114.44,738.22 1114.57,754.30 1114.71,754.30 1114.84,754.30 1114.98,746.26 1115.11,754.30 1115.25,743.58 1115.39,746.26 1115.52,746.26 1115.66,740.90 1115.79,748.94 1115.93,746.26 1116.06,732.86 1116.20,748.94 1116.33,740.90 1116.47,748.94 1116.61,754.30 1116.74,754.30 1116.88,756.98 1117.01,748.94 1117.15,754.30 1117.28,754.30 1117.42,738.22 1117.55,748.94 1117.69,738.22 1117.82,746.26 1117.96,740.90 1118.10,754.30 1118.23,746.26 1118.37,724.82 1118.50,740.90 1118.64,738.22 1118.77,746.26 1118.91,740.90 1119.04,759.66 1119.18,756.98 1119.32,743.58 1119.45,740.90 1119.59,751.62 1119.72,751.62 1119.86,751.62 1119.99,751.62 1120.13,759.66 1120.26,762.34 1120.40,748.94 1120.53,765.02 1120.67,759.66 1120.81,754.30 1120.94,759.66 1121.08,746.26 1121.21,754.30 1121.35,748.94 1121.48,759.66 1121.62,756.98 1121.75,743.58 1121.89,746.26 1122.03,754.30 1122.16,746.26 1122.30,746.26 1122.43,748.94 1122.57,732.86 1122.70,754.30 1122.84,746.26 1122.97,746.26 1123.11,751.62 1123.24,759.66 1123.38,743.58 1123.52,746.26 1123.65,748.94 1123.79,748.94 1123.92,748.94 1124.06,756.98 1124.19,746.26 1124.33,767.70 1124.46,748.94 1124.60,765.02 1124.74,751.62 1124.87,743.58 1125.01,751.62 1125.14,754.30 1125.28,743.58 1125.41,751.62 1125.55,754.30 1125.68,754.30 1125.82,735.54 1125.95,743.58 1126.09,743.58 1126.23,759.66 1126.36,743.58 1126.50,762.34 1126.63,743.58 1126.77,759.66 1126.90,730.18 1127.04,765.02 1127.17,738.22 1127.31,740.90 1127.44,767.70 1127.58,751.62 1127.72,735.54 1127.85,738.22 1127.99,765.02 1128.12,754.30 1128.26,759.66 1128.39,759.66 1128.53,756.98 1128.66,732.86 1128.80,748.94 1128.94,751.62 1129.07,751.62 1129.21,743.58 1129.34,743.58 1129.48,759.66 1129.61,735.54 1129.75,759.66 1129.88,751.62 1130.02,746.26 1130.15,732.86 1130.29,751.62 1130.43,746.26 1130.56,738.22 1130.70,743.58 1130.83,738.22 1130.97,738.22 1131.10,746.26 1131.24,743.58 1131.37,740.90 1131.51,748.94 1131.65,732.86 1131.78,767.70 1131.92,759.66 1132.05,735.54 1132.19,746.26 1132.32,756.98 1132.46,746.26 1132.59,738.22 1132.73,754.30 1132.87,740.90 1133.00,751.62 1133.14,751.62 1133.27,748.94 1133.41,738.22 1133.54,759.66 1133.68,754.30 1133.81,743.58 1133.95,762.34 1134.08,765.02 1134.22,743.58 1134.36,748.94 1134.49,751.62 1134.63,748.94 1134.76,759.66 1134.90,722.14 1135.03,759.66 1135.17,754.30 1135.30,762.34 1135.44,754.30 1135.58,735.54 1135.71,748.94 1135.85,743.58 1135.98,754.30 1136.12,732.86 1136.25,748.94 1136.39,762.34 1136.52,740.90 1136.66,754.30 1136.79,743.58 1136.93,748.94 1137.07,746.26 1137.20,748.94 1137.34,756.98 1137.47,765.02 1137.61,740.90 1137.74,751.62 1137.88,746.26 1138.01,754.30 1138.15,770.38 1138.29,762.34 1138.42,735.54 1138.56,756.98 1138.69,754.30 1138.83,765.02 1138.96,754.30 1139.10,754.30 1139.23,751.62 1139.37,751.62 1139.50,756.98 1139.64,754.30 1139.78,748.94 1139.91,746.26 1140.05,751.62 1140.18,732.86 1140.32,748.94 1140.45,748.94 1140.59,756.98 1140.72,740.90 1140.86,759.66 1140.99,765.02 1141.13,759.66 1141.27,743.58 1141.40,759.66 1141.54,738.22 1141.67,748.94 1141.81,765.02 1141.94,751.62 1142.08,732.86 1142.21,756.98 1142.35,762.34 1142.49,743.58 1142.62,738.22 1142.76,740.90 1142.89,751.62 1143.03,748.94 1143.16,746.26 1143.30,738.22 1143.43,730.18 1143.57,751.62 1143.70,738.22 1143.84,751.62 1143.98,743.58 1144.11,759.66 1144.25,756.98 1144.38,746.26 1144.52,756.98 1144.65,740.90 1144.79,754.30 1144.92,748.94 1145.06,751.62 1145.20,751.62 1145.33,748.94 1145.47,738.22 1145.60,719.46 1145.74,762.34 1145.87,746.26 1146.01,751.62 1146.14,759.66 1146.28,746.26 1146.41,756.98 1146.55,751.62 1146.69,738.22 1146.82,770.38 1146.96,746.26 1147.09,746.26 1147.23,759.66 1147.36,743.58 1147.50,746.26 1147.63,754.30 1147.77,738.22 1147.91,762.34 1148.04,743.58 1148.18,751.62 1148.31,759.66 1148.45,751.62 1148.58,754.30 1148.72,740.90 1148.85,765.02 1148.99,751.62 1149.12,754.30 1149.26,735.54 1149.40,759.66 1149.53,738.22 1149.67,767.70 1149.80,746.26 1149.94,751.62 1150.07,746.26 1150.21,756.98 1150.34,767.70 1150.48,765.02 1150.62,738.22 1150.75,748.94 1150.89,756.98 1151.02,740.90 1151.16,756.98 1151.29,756.98 1151.43,762.34 1151.56,738.22 1151.70,730.18 1151.84,759.66 1151.97,746.26 1152.11,740.90 1152.24,730.18 1152.38,773.06 1152.51,748.94 1152.65,743.58 1152.78,765.02 1152.92,746.26 1153.05,748.94 1153.19,743.58 1153.33,754.30 1153.46,746.26 1153.60,756.98 1153.73,743.58 1153.87,748.94 1154.00,754.30 1154.14,762.34 1154.27,732.86 1154.41,738.22 1154.55,740.90 1154.68,756.98 1154.82,754.30 1154.95,732.86 1155.09,743.58 1155.22,756.98 1155.36,748.94 1155.49,748.94 1155.63,751.62 1155.76,759.66 1155.90,738.22 1156.04,743.58 1156.17,751.62 1156.31,765.02 1156.44,754.30 1156.58,748.94 1156.71,740.90 1156.85,754.30 1156.98,738.22 1157.12,748.94 1157.26,756.98 1157.39,775.74 1157.53,762.34 1157.66,765.02 1157.80,751.62 1157.93,746.26 1158.07,735.54 1158.20,748.94 1158.34,759.66 1158.47,727.50 1158.61,746.26 1158.75,751.62 1158.88,751.62 1159.02,762.34 1159.15,743.58 1159.29,746.26 1159.42,735.54 1159.56,738.22 1159.69,740.90 1159.83,738.22 1159.96,751.62 1160.10,754.30 1160.24,748.94 1160.37,762.34 1160.51,751.62 1160.64,751.62 1160.78,743.58 1160.91,748.94 1161.05,767.70 1161.18,748.94 1161.32,735.54 1161.46,767.70 1161.59,756.98 1161.73,748.94 1161.86,762.34 1162.00,754.30 1162.13,748.94 1162.27,762.34 1162.40,746.26 1162.54,746.26 1162.67,762.34 1162.81,748.94 1162.95,738.22 1163.08,751.62 1163.22,746.26 1163.35,743.58 1163.49,751.62 1163.62,740.90 1163.76,746.26 1163.89,759.66 1164.03,743.58 1164.17,740.90 1164.30,740.90 1164.44,754.30 1164.57,743.58 1164.71,735.54 1164.84,746.26 1164.98,738.22 1165.11,735.54 1165.25,748.94 1165.38,743.58 1165.52,751.62 1165.66,738.22 1165.79,748.94 1165.93,754.30 1166.06,748.94 1166.20,748.94 1166.33,746.26 1166.47,743.58 1166.60,759.66 1166.74,754.30 1166.88,746.26 1167.01,743.58 1167.15,748.94 1167.28,724.82 1167.42,738.22 1167.55,748.94 1167.69,740.90 1167.82,735.54 1167.96,746.26 1168.10,765.02 1168.23,748.94 1168.37,748.94 1168.50,727.50 1168.64,767.70 1168.77,732.86 1168.91,751.62 1169.04,740.90 1169.18,751.62 1169.31,746.26 1169.45,738.22 1169.59,748.94 1169.72,738.22 1169.86,748.94 1169.99,751.62 1170.13,751.62 1170.26,754.30 1170.40,748.94 1170.53,735.54 1170.67,759.66 1170.81,765.02 1170.94,748.94 1171.08,732.86 1171.21,738.22 1171.35,735.54 1171.48,735.54 1171.62,756.98 1171.75,748.94 1171.89,775.74 1172.02,754.30 1172.16,743.58 1172.30,765.02 1172.43,767.70 1172.57,762.34 1172.70,746.26 1172.84,738.22 1172.97,724.82 1173.11,735.54 1173.24,762.34 1173.38,770.38 1173.52,746.26 1173.65,738.22 1173.79,765.02 1173.92,754.30 1174.06,751.62 1174.19,748.94 1174.33,748.94 1174.46,743.58 1174.60,738.22 1174.73,748.94 1174.87,740.90 1175.01,730.18 1175.14,756.98 1175.28,759.66 1175.41,743.58 1175.55,730.18 1175.68,746.26 1175.82,738.22 1175.95,751.62 1176.09,738.22 1176.22,754.30 1176.36,740.90 1176.50,743.58 1176.63,743.58 1176.77,735.54 1176.90,738.22 1177.04,754.30 1177.17,740.90 1177.31,765.02 1177.44,738.22 1177.58,722.14 1177.72,743.58 1177.85,743.58 1177.99,746.26 1178.12,740.90 1178.26,751.62 1178.39,740.90 1178.53,751.62 1178.66,751.62 1178.80,746.26 1178.93,748.94 1179.07,765.02 1179.21,727.50 1179.34,746.26 1179.48,765.02 1179.61,738.22 1179.75,748.94 1179.88,746.26 1180.02,740.90 1180.15,756.98 1180.29,775.74 1180.43,748.94 1180.56,746.26 1180.70,738.22 1180.83,754.30 1180.97,751.62 1181.10,743.58 1181.24,751.62 1181.37,748.94 1181.51,746.26 1181.64,756.98 1181.78,732.86 1181.92,756.98 1182.05,746.26 1182.19,751.62 1182.32,754.30 1182.46,743.58 1182.59,738.22 1182.73,732.86 1182.86,740.90 1183.00,751.62" fill="none" stroke="#0000ff" stroke-width="1.7" stroke-linejoin="round"/>
<rect x="911.00" y="688.90" width="274.00" height="120.10" fill="none" stroke="#000" stroke-width="1.5" stroke-linejoin="miter"/>
<line x1="912.00" y1="809.00" x2="912.00" y2="815.80" stroke="#000" stroke-width="1.5" />
<text x="908.82" y="832.49" font-size="10.50" textLength="6.36" lengthAdjust="spacingAndGlyphs" fill="#000">0</text>
<line x1="979.75" y1="809.00" x2="979.75" y2="815.80" stroke="#000" stroke-width="1.5" />
<text x="970.15" y="832.49" font-size="10.50" textLength="19.09" lengthAdjust="spacingAndGlyphs" fill="#000">500</text>
<line x1="1047.50" y1="809.00" x2="1047.50" y2="815.80" stroke="#000" stroke-width="1.5" />
<text x="1034.56" y="832.49" font-size="10.50" textLength="25.45" lengthAdjust="spacingAndGlyphs" fill="#000">1000</text>
<line x1="1115.25" y1="809.00" x2="1115.25" y2="815.80" stroke="#000" stroke-width="1.5" />
<text x="1102.31" y="832.49" font-size="10.50" textLength="25.45" lengthAdjust="spacingAndGlyphs" fill="#000">1500</text>
<line x1="1183.00" y1="809.00" x2="1183.00" y2="815.80" stroke="#000" stroke-width="1.5" />
<text x="1170.24" y="832.49" font-size="10.50" textLength="25.45" lengthAdjust="spacingAndGlyphs" fill="#000">2000</text>
<line x1="904.20" y1="794.50" x2="911.00" y2="794.50" stroke="#000" stroke-width="1.5" />
<text x="876.78" y="798.85" font-size="10.50" textLength="19.09" lengthAdjust="spacingAndGlyphs" fill="#000">960</text>
<line x1="904.20" y1="767.70" x2="911.00" y2="767.70" stroke="#000" stroke-width="1.5" />
<text x="876.78" y="772.04" font-size="10.50" textLength="19.09" lengthAdjust="spacingAndGlyphs" fill="#000">970</text>
<line x1="904.20" y1="740.90" x2="911.00" y2="740.90" stroke="#000" stroke-width="1.5" />
<text x="876.78" y="745.25" font-size="10.50" textLength="19.09" lengthAdjust="spacingAndGlyphs" fill="#000">980</text>
<line x1="904.20" y1="714.10" x2="911.00" y2="714.10" stroke="#000" stroke-width="1.5" />
<text x="876.78" y="718.45" font-size="10.50" textLength="19.09" lengthAdjust="spacingAndGlyphs" fill="#000">990</text>
<text x="1045.82" y="850.00" font-size="10.92" textLength="6.35" lengthAdjust="spacingAndGlyphs" fill="#000">Y</text>
<g transform="translate(866.10,750.00) rotate(-90)"><text x="-17.41" y="0" font-size="10.92" textLength="34.76" lengthAdjust="spacingAndGlyphs" fill="#000">counts</text></g>
<g transform="translate(1193.60,749.00) rotate(90)"><text x="-19.45" y="0" font-size="10.92" textLength="38.63" lengthAdjust="spacingAndGlyphs" fill="#000">cut in y</text></g>
<rect x="1115.9" y="691.8" width="65.9" height="16.1" rx="1.5" fill="#fff" fill-opacity="0.8" stroke="#cccccc" stroke-width="1.0"/>
<line x1="1118.20" y1="699.90" x2="1139.70" y2="699.90" stroke="#0000ff" stroke-width="1.7" />
<text x="1144.01" y="702.90" font-size="10.50" textLength="33.38" lengthAdjust="spacingAndGlyphs" fill="#000">x=526</text>
</svg></body></html>
